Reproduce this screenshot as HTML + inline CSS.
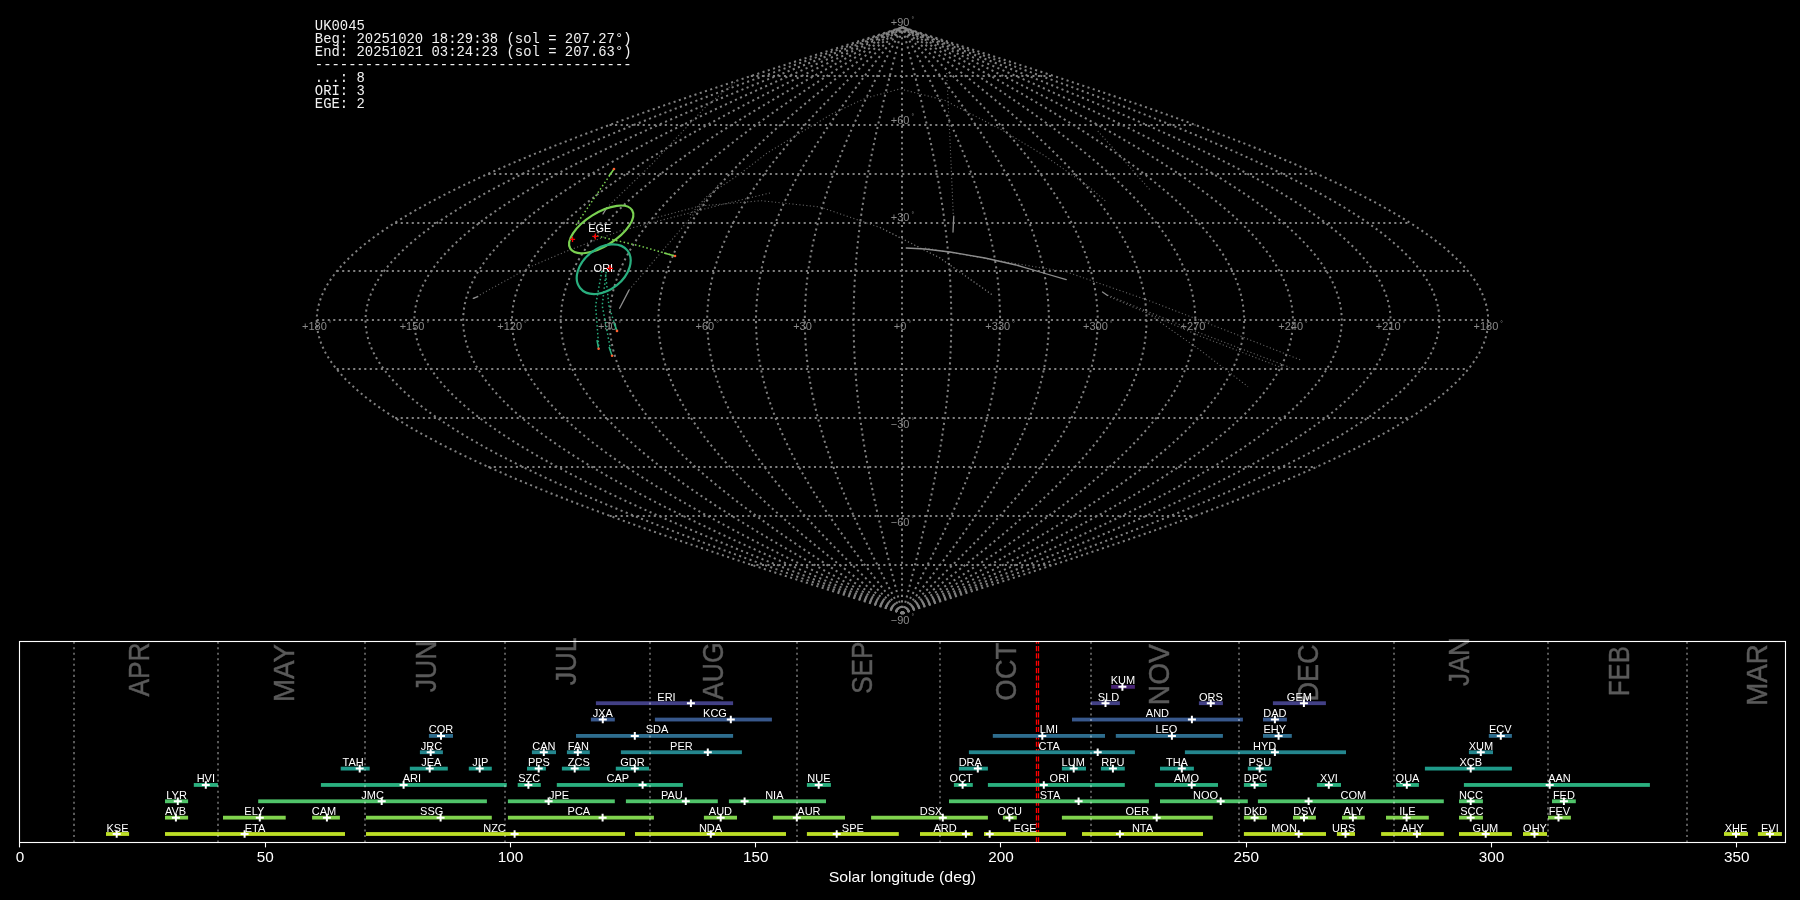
<!DOCTYPE html><html><head><meta charset="utf-8"><style>
html,body{margin:0;padding:0;background:#000;width:1800px;height:900px;overflow:hidden}
svg{display:block;will-change:transform}
svg{font-family:"Liberation Sans",sans-serif}
.mono text{font-family:"Liberation Mono",monospace}
</style></head><body>
<svg width="1800" height="900" viewBox="0 0 1800 900">
<rect width="1800" height="900" fill="#000"/>
<g fill="none" stroke="#808080" stroke-width="2" stroke-dasharray="2.08 3.44"><path d="M750.85 565H1054.05"/><path d="M609.58 516H1195.32"/><path d="M488.26 467H1316.64"/><path d="M395.18 418H1409.72"/><path d="M336.66 369H1468.24"/><path d="M316.7 320H1488.2"/><path d="M336.66 271H1468.24"/><path d="M395.18 223H1409.72"/><path d="M488.26 174H1316.64"/><path d="M609.58 125H1195.32"/><path d="M750.85 76H1054.05"/><path d="M902.45 613.44L912.67 610.18L922.89 606.93L933.11 603.67L943.31 600.41L953.5 597.16L963.68 593.9L973.83 590.64L983.97 587.39L994.08 584.13L1004.16 580.87L1014.22 577.62L1024.23 574.36L1034.22 571.1L1044.16 567.85L1054.05 564.59L1063.9 561.33L1073.71 558.08L1083.46 554.82L1093.15 551.56L1102.79 548.3L1112.36 545.05L1121.88 541.79L1131.32 538.53L1140.7 535.28L1150 532.02L1159.23 528.76L1168.37 525.51L1177.44 522.25L1186.43 518.99L1195.32 515.74L1204.13 512.48L1212.85 509.22L1221.47 505.97L1230 502.71L1238.42 499.45L1246.75 496.2L1254.96 492.94L1263.07 489.68L1271.07 486.43L1278.96 483.17L1286.74 479.91L1294.39 476.66L1301.93 473.4L1309.35 470.14L1316.64 466.89L1323.8 463.63L1330.84 460.37L1337.75 457.11L1344.52 453.86L1351.16 450.6L1357.66 447.34L1364.03 444.09L1370.25 440.83L1376.33 437.57L1382.27 434.32L1388.06 431.06L1393.7 427.8L1399.19 424.55L1404.54 421.29L1409.72 418.03L1414.76 414.78L1419.64 411.52L1424.36 408.26L1428.92 405.01L1433.32 401.75L1437.56 398.49L1441.64 395.24L1445.55 391.98L1449.29 388.72L1452.87 385.47L1456.29 382.21L1459.53 378.95L1462.61 375.7L1465.51 372.44L1468.24 369.18L1470.8 365.92L1473.19 362.67L1475.4 359.41L1477.44 356.15L1479.3 352.9L1480.99 349.64L1482.5 346.38L1483.83 343.13L1484.99 339.87L1485.97 336.61L1486.77 333.36L1487.4 330.1L1487.84 326.84L1488.11 323.59L1488.2 320.33L1488.11 317.07L1487.84 313.82L1487.4 310.56L1486.77 307.3L1485.97 304.05L1484.99 300.79L1483.83 297.53L1482.5 294.28L1480.99 291.02L1479.3 287.76L1477.44 284.51L1475.4 281.25L1473.19 277.99L1470.8 274.74L1468.24 271.48L1465.51 268.22L1462.61 264.96L1459.53 261.71L1456.29 258.45L1452.87 255.19L1449.29 251.94L1445.55 248.68L1441.64 245.42L1437.56 242.17L1433.32 238.91L1428.92 235.65L1424.36 232.4L1419.64 229.14L1414.76 225.88L1409.72 222.63L1404.54 219.37L1399.19 216.11L1393.7 212.86L1388.06 209.6L1382.27 206.34L1376.33 203.09L1370.25 199.83L1364.03 196.57L1357.66 193.32L1351.16 190.06L1344.52 186.8L1337.75 183.55L1330.84 180.29L1323.8 177.03L1316.64 173.77L1309.35 170.52L1301.93 167.26L1294.39 164L1286.74 160.75L1278.96 157.49L1271.07 154.23L1263.07 150.98L1254.96 147.72L1246.75 144.46L1238.42 141.21L1230 137.95L1221.47 134.69L1212.85 131.44L1204.13 128.18L1195.32 124.92L1186.43 121.67L1177.44 118.41L1168.37 115.15L1159.23 111.9L1150 108.64L1140.7 105.38L1131.32 102.13L1121.88 98.87L1112.36 95.61L1102.79 92.36L1093.15 89.1L1083.46 85.84L1073.71 82.58L1063.9 79.33L1054.05 76.07L1044.16 72.81L1034.22 69.56L1024.23 66.3L1014.22 63.04L1004.16 59.79L994.08 56.53L983.97 53.27L973.83 50.02L963.68 46.76L953.5 43.5L943.31 40.25L933.11 36.99L922.89 33.73L912.67 30.48L902.45 27.22"/><path d="M902.45 613.44L911.82 610.18L921.19 606.93L930.55 603.67L939.9 600.41L949.25 597.16L958.58 593.9L967.89 590.64L977.18 587.39L986.45 584.13L995.69 580.87L1004.9 577.62L1014.09 574.36L1023.23 571.1L1032.35 567.85L1041.42 564.59L1050.45 561.33L1059.44 558.08L1068.37 554.82L1077.26 551.56L1086.09 548.3L1094.87 545.05L1103.59 541.79L1112.25 538.53L1120.84 535.28L1129.37 532.02L1137.83 528.76L1146.21 525.51L1154.53 522.25L1162.76 518.99L1170.92 515.74L1178.99 512.48L1186.98 509.22L1194.89 505.97L1202.7 502.71L1210.42 499.45L1218.05 496.2L1225.59 492.94L1233.02 489.68L1240.36 486.43L1247.59 483.17L1254.71 479.91L1261.73 476.66L1268.64 473.4L1275.44 470.14L1282.12 466.89L1288.69 463.63L1295.14 460.37L1301.47 457.11L1307.68 453.86L1313.77 450.6L1319.73 447.34L1325.56 444.09L1331.27 440.83L1336.84 437.57L1342.28 434.32L1347.59 431.06L1352.76 427.8L1357.8 424.55L1362.7 421.29L1367.45 418.03L1372.07 414.78L1376.54 411.52L1380.86 408.26L1385.05 405.01L1389.08 401.75L1392.97 398.49L1396.7 395.24L1400.29 391.98L1403.72 388.72L1407.01 385.47L1410.13 382.21L1413.11 378.95L1415.93 375.7L1418.59 372.44L1421.09 369.18L1423.44 365.92L1425.63 362.67L1427.65 359.41L1429.52 356.15L1431.23 352.9L1432.78 349.64L1434.16 346.38L1435.39 343.13L1436.45 339.87L1437.34 336.61L1438.08 333.36L1438.65 330.1L1439.06 326.84L1439.31 323.59L1439.39 320.33L1439.31 317.07L1439.06 313.82L1438.65 310.56L1438.08 307.3L1437.34 304.05L1436.45 300.79L1435.39 297.53L1434.16 294.28L1432.78 291.02L1431.23 287.76L1429.52 284.51L1427.65 281.25L1425.63 277.99L1423.44 274.74L1421.09 271.48L1418.59 268.22L1415.93 264.96L1413.11 261.71L1410.13 258.45L1407.01 255.19L1403.72 251.94L1400.29 248.68L1396.7 245.42L1392.97 242.17L1389.08 238.91L1385.05 235.65L1380.86 232.4L1376.54 229.14L1372.07 225.88L1367.45 222.63L1362.7 219.37L1357.8 216.11L1352.76 212.86L1347.59 209.6L1342.28 206.34L1336.84 203.09L1331.27 199.83L1325.56 196.57L1319.73 193.32L1313.77 190.06L1307.68 186.8L1301.47 183.55L1295.14 180.29L1288.69 177.03L1282.12 173.77L1275.44 170.52L1268.64 167.26L1261.73 164L1254.71 160.75L1247.59 157.49L1240.36 154.23L1233.02 150.98L1225.59 147.72L1218.05 144.46L1210.42 141.21L1202.7 137.95L1194.89 134.69L1186.98 131.44L1178.99 128.18L1170.92 124.92L1162.76 121.67L1154.53 118.41L1146.21 115.15L1137.83 111.9L1129.37 108.64L1120.84 105.38L1112.25 102.13L1103.59 98.87L1094.87 95.61L1086.09 92.36L1077.26 89.1L1068.37 85.84L1059.44 82.58L1050.45 79.33L1041.42 76.07L1032.35 72.81L1023.23 69.56L1014.09 66.3L1004.9 63.04L995.69 59.79L986.45 56.53L977.18 53.27L967.89 50.02L958.58 46.76L949.25 43.5L939.9 40.25L930.55 36.99L921.19 33.73L911.82 30.48L902.45 27.22"/><path d="M902.45 613.44L910.97 610.18L919.49 606.93L928 603.67L936.5 600.41L944.99 597.16L953.47 593.9L961.94 590.64L970.38 587.39L978.81 584.13L987.21 580.87L995.59 577.62L1003.94 574.36L1012.25 571.1L1020.54 567.85L1028.79 564.59L1037 561.33L1045.16 558.08L1053.29 554.82L1061.37 551.56L1069.4 548.3L1077.38 545.05L1085.3 541.79L1093.18 538.53L1100.99 535.28L1108.74 532.02L1116.43 528.76L1124.05 525.51L1131.61 522.25L1139.1 518.99L1146.51 515.74L1153.85 512.48L1161.12 509.22L1168.3 505.97L1175.41 502.71L1182.43 499.45L1189.36 496.2L1196.21 492.94L1202.97 489.68L1209.64 486.43L1216.21 483.17L1222.69 479.91L1229.07 476.66L1235.35 473.4L1241.53 470.14L1247.61 466.89L1253.58 463.63L1259.44 460.37L1265.2 457.11L1270.84 453.86L1276.38 450.6L1281.79 447.34L1287.1 444.09L1292.28 440.83L1297.35 437.57L1302.3 434.32L1307.12 431.06L1311.83 427.8L1316.4 424.55L1320.85 421.29L1325.18 418.03L1329.37 414.78L1333.44 411.52L1337.37 408.26L1341.17 405.01L1344.84 401.75L1348.37 398.49L1351.77 395.24L1355.03 391.98L1358.15 388.72L1361.14 385.47L1363.98 382.21L1366.68 378.95L1369.25 375.7L1371.67 372.44L1373.94 369.18L1376.08 365.92L1378.06 362.67L1379.91 359.41L1381.61 356.15L1383.16 352.9L1384.57 349.64L1385.82 346.38L1386.94 343.13L1387.9 339.87L1388.72 336.61L1389.39 333.36L1389.91 330.1L1390.28 326.84L1390.5 323.59L1390.57 320.33L1390.5 317.07L1390.28 313.82L1389.91 310.56L1389.39 307.3L1388.72 304.05L1387.9 300.79L1386.94 297.53L1385.82 294.28L1384.57 291.02L1383.16 287.76L1381.61 284.51L1379.91 281.25L1378.06 277.99L1376.08 274.74L1373.94 271.48L1371.67 268.22L1369.25 264.96L1366.68 261.71L1363.98 258.45L1361.14 255.19L1358.15 251.94L1355.03 248.68L1351.77 245.42L1348.37 242.17L1344.84 238.91L1341.17 235.65L1337.37 232.4L1333.44 229.14L1329.37 225.88L1325.18 222.63L1320.85 219.37L1316.4 216.11L1311.83 212.86L1307.12 209.6L1302.3 206.34L1297.35 203.09L1292.28 199.83L1287.1 196.57L1281.79 193.32L1276.38 190.06L1270.84 186.8L1265.2 183.55L1259.44 180.29L1253.58 177.03L1247.61 173.77L1241.53 170.52L1235.35 167.26L1229.07 164L1222.69 160.75L1216.21 157.49L1209.64 154.23L1202.97 150.98L1196.21 147.72L1189.36 144.46L1182.43 141.21L1175.41 137.95L1168.3 134.69L1161.12 131.44L1153.85 128.18L1146.51 124.92L1139.1 121.67L1131.61 118.41L1124.05 115.15L1116.43 111.9L1108.74 108.64L1100.99 105.38L1093.18 102.13L1085.3 98.87L1077.38 95.61L1069.4 92.36L1061.37 89.1L1053.29 85.84L1045.16 82.58L1037 79.33L1028.79 76.07L1020.54 72.81L1012.25 69.56L1003.94 66.3L995.59 63.04L987.21 59.79L978.81 56.53L970.38 53.27L961.94 50.02L953.47 46.76L944.99 43.5L936.5 40.25L928 36.99L919.49 33.73L910.97 30.48L902.45 27.22"/><path d="M902.45 613.44L910.12 610.18L917.78 606.93L925.44 603.67L933.09 600.41L940.74 597.16L948.37 593.9L955.99 590.64L963.59 587.39L971.17 584.13L978.74 580.87L986.27 577.62L993.79 574.36L1001.27 571.1L1008.73 567.85L1016.15 564.59L1023.54 561.33L1030.89 558.08L1038.21 554.82L1045.48 551.56L1052.7 548.3L1059.89 545.05L1067.02 541.79L1074.1 538.53L1081.13 535.28L1088.11 532.02L1095.03 528.76L1101.89 525.51L1108.69 522.25L1115.43 518.99L1122.11 515.74L1128.71 512.48L1135.25 509.22L1141.72 505.97L1148.11 502.71L1154.43 499.45L1160.67 496.2L1166.83 492.94L1172.92 489.68L1178.92 486.43L1184.83 483.17L1190.66 479.91L1196.41 476.66L1202.06 473.4L1207.62 470.14L1213.09 466.89L1218.46 463.63L1223.74 460.37L1228.92 457.11L1234 453.86L1238.98 450.6L1243.86 447.34L1248.63 444.09L1253.3 440.83L1257.86 437.57L1262.31 434.32L1266.66 431.06L1270.89 427.8L1275.01 424.55L1279.01 421.29L1282.91 418.03L1286.68 414.78L1290.34 411.52L1293.88 408.26L1297.3 405.01L1300.6 401.75L1303.78 398.49L1306.84 395.24L1309.77 391.98L1312.58 388.72L1315.27 385.47L1317.83 382.21L1320.26 378.95L1322.57 375.7L1324.74 372.44L1326.79 369.18L1328.71 365.92L1330.5 362.67L1332.16 359.41L1333.69 356.15L1335.09 352.9L1336.35 349.64L1337.49 346.38L1338.49 343.13L1339.36 339.87L1340.09 336.61L1340.69 333.36L1341.16 330.1L1341.49 326.84L1341.7 323.59L1341.76 320.33L1341.7 317.07L1341.49 313.82L1341.16 310.56L1340.69 307.3L1340.09 304.05L1339.36 300.79L1338.49 297.53L1337.49 294.28L1336.35 291.02L1335.09 287.76L1333.69 284.51L1332.16 281.25L1330.5 277.99L1328.71 274.74L1326.79 271.48L1324.74 268.22L1322.57 264.96L1320.26 261.71L1317.83 258.45L1315.27 255.19L1312.58 251.94L1309.77 248.68L1306.84 245.42L1303.78 242.17L1300.6 238.91L1297.3 235.65L1293.88 232.4L1290.34 229.14L1286.68 225.88L1282.91 222.63L1279.01 219.37L1275.01 216.11L1270.89 212.86L1266.66 209.6L1262.31 206.34L1257.86 203.09L1253.3 199.83L1248.63 196.57L1243.86 193.32L1238.98 190.06L1234 186.8L1228.92 183.55L1223.74 180.29L1218.46 177.03L1213.09 173.77L1207.62 170.52L1202.06 167.26L1196.41 164L1190.66 160.75L1184.83 157.49L1178.92 154.23L1172.92 150.98L1166.83 147.72L1160.67 144.46L1154.43 141.21L1148.11 137.95L1141.72 134.69L1135.25 131.44L1128.71 128.18L1122.11 124.92L1115.43 121.67L1108.69 118.41L1101.89 115.15L1095.03 111.9L1088.11 108.64L1081.13 105.38L1074.1 102.13L1067.02 98.87L1059.89 95.61L1052.7 92.36L1045.48 89.1L1038.21 85.84L1030.89 82.58L1023.54 79.33L1016.15 76.07L1008.73 72.81L1001.27 69.56L993.79 66.3L986.27 63.04L978.74 59.79L971.17 56.53L963.59 53.27L955.99 50.02L948.37 46.76L940.74 43.5L933.09 40.25L925.44 36.99L917.78 33.73L910.12 30.48L902.45 27.22"/><path d="M902.45 613.44L909.27 610.18L916.08 606.93L922.89 603.67L929.69 600.41L936.48 597.16L943.27 593.9L950.04 590.64L956.8 587.39L963.54 584.13L970.26 580.87L976.96 577.62L983.64 574.36L990.29 571.1L996.92 567.85L1003.52 564.59L1010.09 561.33L1016.62 558.08L1023.12 554.82L1029.58 551.56L1036.01 548.3L1042.39 545.05L1048.73 541.79L1055.03 538.53L1061.28 535.28L1067.48 532.02L1073.63 528.76L1079.73 525.51L1085.78 522.25L1091.77 518.99L1097.7 515.74L1103.57 512.48L1109.38 509.22L1115.13 505.97L1120.81 502.71L1126.43 499.45L1131.98 496.2L1137.46 492.94L1142.87 489.68L1148.2 486.43L1153.46 483.17L1158.64 479.91L1163.75 476.66L1168.77 473.4L1173.71 470.14L1178.58 466.89L1183.35 463.63L1188.04 460.37L1192.65 457.11L1197.16 453.86L1201.59 450.6L1205.93 447.34L1210.17 444.09L1214.32 440.83L1218.37 437.57L1222.33 434.32L1226.19 431.06L1229.95 427.8L1233.61 424.55L1237.17 421.29L1240.63 418.03L1243.99 414.78L1247.24 411.52L1250.39 408.26L1253.43 405.01L1256.36 401.75L1259.19 398.49L1261.91 395.24L1264.52 391.98L1267.01 388.72L1269.4 385.47L1271.67 382.21L1273.84 378.95L1275.89 375.7L1277.82 372.44L1279.64 369.18L1281.35 365.92L1282.94 362.67L1284.42 359.41L1285.78 356.15L1287.02 352.9L1288.14 349.64L1289.15 346.38L1290.04 343.13L1290.81 339.87L1291.46 336.61L1292 333.36L1292.41 330.1L1292.71 326.84L1292.89 323.59L1292.95 320.33L1292.89 317.07L1292.71 313.82L1292.41 310.56L1292 307.3L1291.46 304.05L1290.81 300.79L1290.04 297.53L1289.15 294.28L1288.14 291.02L1287.02 287.76L1285.78 284.51L1284.42 281.25L1282.94 277.99L1281.35 274.74L1279.64 271.48L1277.82 268.22L1275.89 264.96L1273.84 261.71L1271.67 258.45L1269.4 255.19L1267.01 251.94L1264.52 248.68L1261.91 245.42L1259.19 242.17L1256.36 238.91L1253.43 235.65L1250.39 232.4L1247.24 229.14L1243.99 225.88L1240.63 222.63L1237.17 219.37L1233.61 216.11L1229.95 212.86L1226.19 209.6L1222.33 206.34L1218.37 203.09L1214.32 199.83L1210.17 196.57L1205.93 193.32L1201.59 190.06L1197.16 186.8L1192.65 183.55L1188.04 180.29L1183.35 177.03L1178.58 173.77L1173.71 170.52L1168.77 167.26L1163.75 164L1158.64 160.75L1153.46 157.49L1148.2 154.23L1142.87 150.98L1137.46 147.72L1131.98 144.46L1126.43 141.21L1120.81 137.95L1115.13 134.69L1109.38 131.44L1103.57 128.18L1097.7 124.92L1091.77 121.67L1085.78 118.41L1079.73 115.15L1073.63 111.9L1067.48 108.64L1061.28 105.38L1055.03 102.13L1048.73 98.87L1042.39 95.61L1036.01 92.36L1029.58 89.1L1023.12 85.84L1016.62 82.58L1010.09 79.33L1003.52 76.07L996.92 72.81L990.29 69.56L983.64 66.3L976.96 63.04L970.26 59.79L963.54 56.53L956.8 53.27L950.04 50.02L943.27 46.76L936.48 43.5L929.69 40.25L922.89 36.99L916.08 33.73L909.27 30.48L902.45 27.22"/><path d="M902.45 613.44L908.41 610.18L914.37 606.93L920.33 603.67L926.28 600.41L932.23 597.16L938.17 593.9L944.09 590.64L950 587.39L955.9 584.13L961.78 580.87L967.65 577.62L973.49 574.36L979.31 571.1L985.11 567.85L990.89 564.59L996.63 561.33L1002.35 558.08L1008.04 554.82L1013.69 551.56L1019.31 548.3L1024.9 545.05L1030.45 541.79L1035.96 538.53L1041.43 535.28L1046.85 532.02L1052.24 528.76L1057.57 525.51L1062.86 522.25L1068.1 518.99L1073.29 515.74L1078.43 512.48L1083.52 509.22L1088.55 505.97L1093.52 502.71L1098.43 499.45L1103.29 496.2L1108.08 492.94L1112.81 489.68L1117.48 486.43L1122.08 483.17L1126.62 479.91L1131.08 476.66L1135.48 473.4L1139.81 470.14L1144.06 466.89L1148.24 463.63L1152.34 460.37L1156.37 457.11L1160.32 453.86L1164.2 450.6L1167.99 447.34L1171.7 444.09L1175.33 440.83L1178.88 437.57L1182.34 434.32L1185.72 431.06L1189.01 427.8L1192.22 424.55L1195.33 421.29L1198.36 418.03L1201.3 414.78L1204.14 411.52L1206.9 408.26L1209.56 405.01L1212.12 401.75L1214.6 398.49L1216.97 395.24L1219.26 391.98L1221.44 388.72L1223.53 385.47L1225.52 382.21L1227.41 378.95L1229.21 375.7L1230.9 372.44L1232.49 369.18L1233.99 365.92L1235.38 362.67L1236.67 359.41L1237.86 356.15L1238.95 352.9L1239.93 349.64L1240.81 346.38L1241.59 343.13L1242.27 339.87L1242.84 336.61L1243.31 333.36L1243.67 330.1L1243.93 326.84L1244.09 323.59L1244.14 320.33L1244.09 317.07L1243.93 313.82L1243.67 310.56L1243.31 307.3L1242.84 304.05L1242.27 300.79L1241.59 297.53L1240.81 294.28L1239.93 291.02L1238.95 287.76L1237.86 284.51L1236.67 281.25L1235.38 277.99L1233.99 274.74L1232.49 271.48L1230.9 268.22L1229.21 264.96L1227.41 261.71L1225.52 258.45L1223.53 255.19L1221.44 251.94L1219.26 248.68L1216.97 245.42L1214.6 242.17L1212.12 238.91L1209.56 235.65L1206.9 232.4L1204.14 229.14L1201.3 225.88L1198.36 222.63L1195.33 219.37L1192.22 216.11L1189.01 212.86L1185.72 209.6L1182.34 206.34L1178.88 203.09L1175.33 199.83L1171.7 196.57L1167.99 193.32L1164.2 190.06L1160.32 186.8L1156.37 183.55L1152.34 180.29L1148.24 177.03L1144.06 173.77L1139.81 170.52L1135.48 167.26L1131.08 164L1126.62 160.75L1122.08 157.49L1117.48 154.23L1112.81 150.98L1108.08 147.72L1103.29 144.46L1098.43 141.21L1093.52 137.95L1088.55 134.69L1083.52 131.44L1078.43 128.18L1073.29 124.92L1068.1 121.67L1062.86 118.41L1057.57 115.15L1052.24 111.9L1046.85 108.64L1041.43 105.38L1035.96 102.13L1030.45 98.87L1024.9 95.61L1019.31 92.36L1013.69 89.1L1008.04 85.84L1002.35 82.58L996.63 79.33L990.89 76.07L985.11 72.81L979.31 69.56L973.49 66.3L967.65 63.04L961.78 59.79L955.9 56.53L950 53.27L944.09 50.02L938.17 46.76L932.23 43.5L926.28 40.25L920.33 36.99L914.37 33.73L908.41 30.48L902.45 27.22"/><path d="M902.45 613.44L907.56 610.18L912.67 606.93L917.78 603.67L922.88 600.41L927.98 597.16L933.06 593.9L938.14 590.64L943.21 587.39L948.27 584.13L953.31 580.87L958.33 577.62L963.34 574.36L968.33 571.1L973.3 567.85L978.25 564.59L983.18 561.33L988.08 558.08L992.95 554.82L997.8 551.56L1002.62 548.3L1007.41 545.05L1012.16 541.79L1016.89 538.53L1021.57 535.28L1026.22 532.02L1030.84 528.76L1035.41 525.51L1039.95 522.25L1044.44 518.99L1048.89 515.74L1053.29 512.48L1057.65 509.22L1061.96 505.97L1066.22 502.71L1070.44 499.45L1074.6 496.2L1078.71 492.94L1082.76 489.68L1086.76 486.43L1090.71 483.17L1094.59 479.91L1098.42 476.66L1102.19 473.4L1105.9 470.14L1109.54 466.89L1113.13 463.63L1116.65 460.37L1120.1 457.11L1123.49 453.86L1126.81 450.6L1130.06 447.34L1133.24 444.09L1136.35 440.83L1139.39 437.57L1142.36 434.32L1145.25 431.06L1148.08 427.8L1150.82 424.55L1153.49 421.29L1156.09 418.03L1158.6 414.78L1161.04 411.52L1163.4 408.26L1165.68 405.01L1167.88 401.75L1170 398.49L1172.04 395.24L1174 391.98L1175.87 388.72L1177.66 385.47L1179.37 382.21L1180.99 378.95L1182.53 375.7L1183.98 372.44L1185.35 369.18L1186.63 365.92L1187.82 362.67L1188.92 359.41L1189.94 356.15L1190.88 352.9L1191.72 349.64L1192.47 346.38L1193.14 343.13L1193.72 339.87L1194.21 336.61L1194.61 333.36L1194.92 330.1L1195.15 326.84L1195.28 323.59L1195.32 320.33L1195.28 317.07L1195.15 313.82L1194.92 310.56L1194.61 307.3L1194.21 304.05L1193.72 300.79L1193.14 297.53L1192.47 294.28L1191.72 291.02L1190.88 287.76L1189.94 284.51L1188.92 281.25L1187.82 277.99L1186.63 274.74L1185.35 271.48L1183.98 268.22L1182.53 264.96L1180.99 261.71L1179.37 258.45L1177.66 255.19L1175.87 251.94L1174 248.68L1172.04 245.42L1170 242.17L1167.88 238.91L1165.68 235.65L1163.4 232.4L1161.04 229.14L1158.6 225.88L1156.09 222.63L1153.49 219.37L1150.82 216.11L1148.08 212.86L1145.25 209.6L1142.36 206.34L1139.39 203.09L1136.35 199.83L1133.24 196.57L1130.06 193.32L1126.81 190.06L1123.49 186.8L1120.1 183.55L1116.65 180.29L1113.13 177.03L1109.54 173.77L1105.9 170.52L1102.19 167.26L1098.42 164L1094.59 160.75L1090.71 157.49L1086.76 154.23L1082.76 150.98L1078.71 147.72L1074.6 144.46L1070.44 141.21L1066.22 137.95L1061.96 134.69L1057.65 131.44L1053.29 128.18L1048.89 124.92L1044.44 121.67L1039.95 118.41L1035.41 115.15L1030.84 111.9L1026.22 108.64L1021.57 105.38L1016.89 102.13L1012.16 98.87L1007.41 95.61L1002.62 92.36L997.8 89.1L992.95 85.84L988.08 82.58L983.18 79.33L978.25 76.07L973.3 72.81L968.33 69.56L963.34 66.3L958.33 63.04L953.31 59.79L948.27 56.53L943.21 53.27L938.14 50.02L933.06 46.76L927.98 43.5L922.88 40.25L917.78 36.99L912.67 33.73L907.56 30.48L902.45 27.22"/><path d="M902.45 613.44L906.71 610.18L910.97 606.93L915.22 603.67L919.47 600.41L923.72 597.16L927.96 593.9L932.19 590.64L936.42 587.39L940.63 584.13L944.83 580.87L949.02 577.62L953.19 574.36L957.35 571.1L961.49 567.85L965.62 564.59L969.72 561.33L973.81 558.08L977.87 554.82L981.91 551.56L985.92 548.3L989.91 545.05L993.88 541.79L997.81 538.53L1001.72 535.28L1005.6 532.02L1009.44 528.76L1013.25 525.51L1017.03 522.25L1020.77 518.99L1024.48 515.74L1028.15 512.48L1031.78 509.22L1035.38 505.97L1038.93 502.71L1042.44 499.45L1045.91 496.2L1049.33 492.94L1052.71 489.68L1056.04 486.43L1059.33 483.17L1062.57 479.91L1065.76 476.66L1068.9 473.4L1071.99 470.14L1075.03 466.89L1078.01 463.63L1080.95 460.37L1083.82 457.11L1086.65 453.86L1089.41 450.6L1092.12 447.34L1094.77 444.09L1097.37 440.83L1099.9 437.57L1102.37 434.32L1104.79 431.06L1107.14 427.8L1109.43 424.55L1111.65 421.29L1113.81 418.03L1115.91 414.78L1117.94 411.52L1119.91 408.26L1121.81 405.01L1123.65 401.75L1125.41 398.49L1127.11 395.24L1128.74 391.98L1130.3 388.72L1131.79 385.47L1133.22 382.21L1134.57 378.95L1135.85 375.7L1137.06 372.44L1138.2 369.18L1139.26 365.92L1140.26 362.67L1141.18 359.41L1142.03 356.15L1142.8 352.9L1143.51 349.64L1144.14 346.38L1144.69 343.13L1145.18 339.87L1145.58 336.61L1145.92 333.36L1146.18 330.1L1146.36 326.84L1146.48 323.59L1146.51 320.33L1146.48 317.07L1146.36 313.82L1146.18 310.56L1145.92 307.3L1145.58 304.05L1145.18 300.79L1144.69 297.53L1144.14 294.28L1143.51 291.02L1142.8 287.76L1142.03 284.51L1141.18 281.25L1140.26 277.99L1139.26 274.74L1138.2 271.48L1137.06 268.22L1135.85 264.96L1134.57 261.71L1133.22 258.45L1131.79 255.19L1130.3 251.94L1128.74 248.68L1127.11 245.42L1125.41 242.17L1123.65 238.91L1121.81 235.65L1119.91 232.4L1117.94 229.14L1115.91 225.88L1113.81 222.63L1111.65 219.37L1109.43 216.11L1107.14 212.86L1104.79 209.6L1102.37 206.34L1099.9 203.09L1097.37 199.83L1094.77 196.57L1092.12 193.32L1089.41 190.06L1086.65 186.8L1083.82 183.55L1080.95 180.29L1078.01 177.03L1075.03 173.77L1071.99 170.52L1068.9 167.26L1065.76 164L1062.57 160.75L1059.33 157.49L1056.04 154.23L1052.71 150.98L1049.33 147.72L1045.91 144.46L1042.44 141.21L1038.93 137.95L1035.38 134.69L1031.78 131.44L1028.15 128.18L1024.48 124.92L1020.77 121.67L1017.03 118.41L1013.25 115.15L1009.44 111.9L1005.6 108.64L1001.72 105.38L997.81 102.13L993.88 98.87L989.91 95.61L985.92 92.36L981.91 89.1L977.87 85.84L973.81 82.58L969.72 79.33L965.62 76.07L961.49 72.81L957.35 69.56L953.19 66.3L949.02 63.04L944.83 59.79L940.63 56.53L936.42 53.27L932.19 50.02L927.96 46.76L923.72 43.5L919.47 40.25L915.22 36.99L910.97 33.73L906.71 30.48L902.45 27.22"/><path d="M902.45 613.44L905.86 610.18L909.26 606.93L912.67 603.67L916.07 600.41L919.47 597.16L922.86 593.9L926.24 590.64L929.62 587.39L932.99 584.13L936.35 580.87L939.71 577.62L943.04 574.36L946.37 571.1L949.69 567.85L952.98 564.59L956.27 561.33L959.54 558.08L962.79 554.82L966.02 551.56L969.23 548.3L972.42 545.05L975.59 541.79L978.74 538.53L981.87 535.28L984.97 532.02L988.04 528.76L991.09 525.51L994.11 522.25L997.11 518.99L1000.07 515.74L1003.01 512.48L1005.92 509.22L1008.79 505.97L1011.63 502.71L1014.44 499.45L1017.22 496.2L1019.95 492.94L1022.66 489.68L1025.32 486.43L1027.95 483.17L1030.55 479.91L1033.1 476.66L1035.61 473.4L1038.08 470.14L1040.51 466.89L1042.9 463.63L1045.25 460.37L1047.55 457.11L1049.81 453.86L1052.02 450.6L1054.19 447.34L1056.31 444.09L1058.38 440.83L1060.41 437.57L1062.39 434.32L1064.32 431.06L1066.2 427.8L1068.03 424.55L1069.81 421.29L1071.54 418.03L1073.22 414.78L1074.85 411.52L1076.42 408.26L1077.94 405.01L1079.41 401.75L1080.82 398.49L1082.18 395.24L1083.48 391.98L1084.73 388.72L1085.92 385.47L1087.06 382.21L1088.14 378.95L1089.17 375.7L1090.14 372.44L1091.05 369.18L1091.9 365.92L1092.7 362.67L1093.43 359.41L1094.11 356.15L1094.73 352.9L1095.3 349.64L1095.8 346.38L1096.24 343.13L1096.63 339.87L1096.96 336.61L1097.22 333.36L1097.43 330.1L1097.58 326.84L1097.67 323.59L1097.7 320.33L1097.67 317.07L1097.58 313.82L1097.43 310.56L1097.22 307.3L1096.96 304.05L1096.63 300.79L1096.24 297.53L1095.8 294.28L1095.3 291.02L1094.73 287.76L1094.11 284.51L1093.43 281.25L1092.7 277.99L1091.9 274.74L1091.05 271.48L1090.14 268.22L1089.17 264.96L1088.14 261.71L1087.06 258.45L1085.92 255.19L1084.73 251.94L1083.48 248.68L1082.18 245.42L1080.82 242.17L1079.41 238.91L1077.94 235.65L1076.42 232.4L1074.85 229.14L1073.22 225.88L1071.54 222.63L1069.81 219.37L1068.03 216.11L1066.2 212.86L1064.32 209.6L1062.39 206.34L1060.41 203.09L1058.38 199.83L1056.31 196.57L1054.19 193.32L1052.02 190.06L1049.81 186.8L1047.55 183.55L1045.25 180.29L1042.9 177.03L1040.51 173.77L1038.08 170.52L1035.61 167.26L1033.1 164L1030.55 160.75L1027.95 157.49L1025.32 154.23L1022.66 150.98L1019.95 147.72L1017.22 144.46L1014.44 141.21L1011.63 137.95L1008.79 134.69L1005.92 131.44L1003.01 128.18L1000.07 124.92L997.11 121.67L994.11 118.41L991.09 115.15L988.04 111.9L984.97 108.64L981.87 105.38L978.74 102.13L975.59 98.87L972.42 95.61L969.23 92.36L966.02 89.1L962.79 85.84L959.54 82.58L956.27 79.33L952.98 76.07L949.69 72.81L946.37 69.56L943.04 66.3L939.71 63.04L936.35 59.79L932.99 56.53L929.62 53.27L926.24 50.02L922.86 46.76L919.47 43.5L916.07 40.25L912.67 36.99L909.26 33.73L905.86 30.48L902.45 27.22"/><path d="M902.45 613.44L905.01 610.18L907.56 606.93L910.11 603.67L912.66 600.41L915.21 597.16L917.76 593.9L920.3 590.64L922.83 587.39L925.36 584.13L927.88 580.87L930.39 577.62L932.9 574.36L935.39 571.1L937.88 567.85L940.35 564.59L942.81 561.33L945.26 558.08L947.7 554.82L950.13 551.56L952.53 548.3L954.93 545.05L957.31 541.79L959.67 538.53L962.01 535.28L964.34 532.02L966.64 528.76L968.93 525.51L971.2 522.25L973.44 518.99L975.67 515.74L977.87 512.48L980.05 509.22L982.21 505.97L984.34 502.71L986.44 499.45L988.52 496.2L990.58 492.94L992.61 489.68L994.61 486.43L996.58 483.17L998.52 479.91L1000.44 476.66L1002.32 473.4L1004.17 470.14L1006 466.89L1007.79 463.63L1009.55 460.37L1011.27 457.11L1012.97 453.86L1014.63 450.6L1016.25 447.34L1017.84 444.09L1019.4 440.83L1020.92 437.57L1022.4 434.32L1023.85 431.06L1025.26 427.8L1026.64 424.55L1027.97 421.29L1029.27 418.03L1030.53 414.78L1031.75 411.52L1032.93 408.26L1034.07 405.01L1035.17 401.75L1036.23 398.49L1037.25 395.24L1038.22 391.98L1039.16 388.72L1040.06 385.47L1040.91 382.21L1041.72 378.95L1042.49 375.7L1043.21 372.44L1043.9 369.18L1044.54 365.92L1045.13 362.67L1045.69 359.41L1046.2 356.15L1046.66 352.9L1047.08 349.64L1047.46 346.38L1047.8 343.13L1048.09 339.87L1048.33 336.61L1048.53 333.36L1048.69 330.1L1048.8 326.84L1048.87 323.59L1048.89 320.33L1048.87 317.07L1048.8 313.82L1048.69 310.56L1048.53 307.3L1048.33 304.05L1048.09 300.79L1047.8 297.53L1047.46 294.28L1047.08 291.02L1046.66 287.76L1046.2 284.51L1045.69 281.25L1045.13 277.99L1044.54 274.74L1043.9 271.48L1043.21 268.22L1042.49 264.96L1041.72 261.71L1040.91 258.45L1040.06 255.19L1039.16 251.94L1038.22 248.68L1037.25 245.42L1036.23 242.17L1035.17 238.91L1034.07 235.65L1032.93 232.4L1031.75 229.14L1030.53 225.88L1029.27 222.63L1027.97 219.37L1026.64 216.11L1025.26 212.86L1023.85 209.6L1022.4 206.34L1020.92 203.09L1019.4 199.83L1017.84 196.57L1016.25 193.32L1014.63 190.06L1012.97 186.8L1011.27 183.55L1009.55 180.29L1007.79 177.03L1006 173.77L1004.17 170.52L1002.32 167.26L1000.44 164L998.52 160.75L996.58 157.49L994.61 154.23L992.61 150.98L990.58 147.72L988.52 144.46L986.44 141.21L984.34 137.95L982.21 134.69L980.05 131.44L977.87 128.18L975.67 124.92L973.44 121.67L971.2 118.41L968.93 115.15L966.64 111.9L964.34 108.64L962.01 105.38L959.67 102.13L957.31 98.87L954.93 95.61L952.53 92.36L950.13 89.1L947.7 85.84L945.26 82.58L942.81 79.33L940.35 76.07L937.88 72.81L935.39 69.56L932.9 66.3L930.39 63.04L927.88 59.79L925.36 56.53L922.83 53.27L920.3 50.02L917.76 46.76L915.21 43.5L912.66 40.25L910.11 36.99L907.56 33.73L905.01 30.48L902.45 27.22"/><path d="M902.45 613.44L904.15 610.18L905.86 606.93L907.56 603.67L909.26 600.41L910.96 597.16L912.65 593.9L914.35 590.64L916.04 587.39L917.72 584.13L919.4 580.87L921.08 577.62L922.75 574.36L924.41 571.1L926.07 567.85L927.72 564.59L929.36 561.33L930.99 558.08L932.62 554.82L934.23 551.56L935.84 548.3L937.44 545.05L939.02 541.79L940.6 538.53L942.16 535.28L943.71 532.02L945.25 528.76L946.77 525.51L948.28 522.25L949.78 518.99L951.26 515.74L952.73 512.48L954.18 509.22L955.62 505.97L957.04 502.71L958.45 499.45L959.83 496.2L961.2 492.94L962.55 489.68L963.89 486.43L965.2 483.17L966.5 479.91L967.77 476.66L969.03 473.4L970.27 470.14L971.48 466.89L972.68 463.63L973.85 460.37L975 457.11L976.13 453.86L977.24 450.6L978.32 447.34L979.38 444.09L980.42 440.83L981.43 437.57L982.42 434.32L983.38 431.06L984.33 427.8L985.24 424.55L986.13 421.29L987 418.03L987.83 414.78L988.65 411.52L989.43 408.26L990.19 405.01L990.93 401.75L991.63 398.49L992.31 395.24L992.97 391.98L993.59 388.72L994.19 385.47L994.76 382.21L995.3 378.95L995.81 375.7L996.29 372.44L996.75 369.18L997.18 365.92L997.57 362.67L997.94 359.41L998.28 356.15L998.59 352.9L998.87 349.64L999.12 346.38L999.35 343.13L999.54 339.87L999.7 336.61L999.84 333.36L999.94 330.1L1000.02 326.84L1000.06 323.59L1000.07 320.33L1000.06 317.07L1000.02 313.82L999.94 310.56L999.84 307.3L999.7 304.05L999.54 300.79L999.35 297.53L999.12 294.28L998.87 291.02L998.59 287.76L998.28 284.51L997.94 281.25L997.57 277.99L997.18 274.74L996.75 271.48L996.29 268.22L995.81 264.96L995.3 261.71L994.76 258.45L994.19 255.19L993.59 251.94L992.97 248.68L992.31 245.42L991.63 242.17L990.93 238.91L990.19 235.65L989.43 232.4L988.65 229.14L987.83 225.88L987 222.63L986.13 219.37L985.24 216.11L984.33 212.86L983.38 209.6L982.42 206.34L981.43 203.09L980.42 199.83L979.38 196.57L978.32 193.32L977.24 190.06L976.13 186.8L975 183.55L973.85 180.29L972.68 177.03L971.48 173.77L970.27 170.52L969.03 167.26L967.77 164L966.5 160.75L965.2 157.49L963.89 154.23L962.55 150.98L961.2 147.72L959.83 144.46L958.45 141.21L957.04 137.95L955.62 134.69L954.18 131.44L952.73 128.18L951.26 124.92L949.78 121.67L948.28 118.41L946.77 115.15L945.25 111.9L943.71 108.64L942.16 105.38L940.6 102.13L939.02 98.87L937.44 95.61L935.84 92.36L934.23 89.1L932.62 85.84L930.99 82.58L929.36 79.33L927.72 76.07L926.07 72.81L924.41 69.56L922.75 66.3L921.08 63.04L919.4 59.79L917.72 56.53L916.04 53.27L914.35 50.02L912.65 46.76L910.96 43.5L909.26 40.25L907.56 36.99L905.86 33.73L904.15 30.48L902.45 27.22"/><path d="M902.45 613.44L903.3 610.18L904.15 606.93L905 603.67L905.85 600.41L906.7 597.16L907.55 593.9L908.4 590.64L909.24 587.39L910.09 584.13L910.93 580.87L911.76 577.62L912.6 574.36L913.43 571.1L914.26 567.85L915.08 564.59L915.9 561.33L916.72 558.08L917.53 554.82L918.34 551.56L919.14 548.3L919.94 545.05L920.74 541.79L921.52 538.53L922.3 535.28L923.08 532.02L923.85 528.76L924.61 525.51L925.37 522.25L926.11 518.99L926.86 515.74L927.59 512.48L928.32 509.22L929.04 505.97L929.75 502.71L930.45 499.45L931.14 496.2L931.83 492.94L932.5 489.68L933.17 486.43L933.83 483.17L934.47 479.91L935.11 476.66L935.74 473.4L936.36 470.14L936.97 466.89L937.56 463.63L938.15 460.37L938.72 457.11L939.29 453.86L939.84 450.6L940.38 447.34L940.91 444.09L941.43 440.83L941.94 437.57L942.43 434.32L942.92 431.06L943.39 427.8L943.85 424.55L944.29 421.29L944.72 418.03L945.14 414.78L945.55 411.52L945.94 408.26L946.32 405.01L946.69 401.75L947.04 398.49L947.38 395.24L947.71 391.98L948.02 388.72L948.32 385.47L948.6 382.21L948.87 378.95L949.13 375.7L949.37 372.44L949.6 369.18L949.81 365.92L950.01 362.67L950.2 359.41L950.37 356.15L950.52 352.9L950.66 349.64L950.79 346.38L950.9 343.13L951 339.87L951.08 336.61L951.14 333.36L951.2 330.1L951.23 326.84L951.26 323.59L951.26 320.33L951.26 317.07L951.23 313.82L951.2 310.56L951.14 307.3L951.08 304.05L951 300.79L950.9 297.53L950.79 294.28L950.66 291.02L950.52 287.76L950.37 284.51L950.2 281.25L950.01 277.99L949.81 274.74L949.6 271.48L949.37 268.22L949.13 264.96L948.87 261.71L948.6 258.45L948.32 255.19L948.02 251.94L947.71 248.68L947.38 245.42L947.04 242.17L946.69 238.91L946.32 235.65L945.94 232.4L945.55 229.14L945.14 225.88L944.72 222.63L944.29 219.37L943.85 216.11L943.39 212.86L942.92 209.6L942.43 206.34L941.94 203.09L941.43 199.83L940.91 196.57L940.38 193.32L939.84 190.06L939.29 186.8L938.72 183.55L938.15 180.29L937.56 177.03L936.97 173.77L936.36 170.52L935.74 167.26L935.11 164L934.47 160.75L933.83 157.49L933.17 154.23L932.5 150.98L931.83 147.72L931.14 144.46L930.45 141.21L929.75 137.95L929.04 134.69L928.32 131.44L927.59 128.18L926.86 124.92L926.11 121.67L925.37 118.41L924.61 115.15L923.85 111.9L923.08 108.64L922.3 105.38L921.52 102.13L920.74 98.87L919.94 95.61L919.14 92.36L918.34 89.1L917.53 85.84L916.72 82.58L915.9 79.33L915.08 76.07L914.26 72.81L913.43 69.56L912.6 66.3L911.76 63.04L910.93 59.79L910.09 56.53L909.24 53.27L908.4 50.02L907.55 46.76L906.7 43.5L905.85 40.25L905 36.99L904.15 33.73L903.3 30.48L902.45 27.22"/><path d="M902 613.44L902 610.18L902 606.93L902 603.67L902 600.41L902 597.16L902 593.9L902 590.64L902 587.39L902 584.13L902 580.87L902 577.62L902 574.36L902 571.1L902 567.85L902 564.59L902 561.33L902 558.08L902 554.82L902 551.56L902 548.3L902 545.05L902 541.79L902 538.53L902 535.28L902 532.02L902 528.76L902 525.51L902 522.25L902 518.99L902 515.74L902 512.48L902 509.22L902 505.97L902 502.71L902 499.45L902 496.2L902 492.94L902 489.68L902 486.43L902 483.17L902 479.91L902 476.66L902 473.4L902 470.14L902 466.89L902 463.63L902 460.37L902 457.11L902 453.86L902 450.6L902 447.34L902 444.09L902 440.83L902 437.57L902 434.32L902 431.06L902 427.8L902 424.55L902 421.29L902 418.03L902 414.78L902 411.52L902 408.26L902 405.01L902 401.75L902 398.49L902 395.24L902 391.98L902 388.72L902 385.47L902 382.21L902 378.95L902 375.7L902 372.44L902 369.18L902 365.92L902 362.67L902 359.41L902 356.15L902 352.9L902 349.64L902 346.38L902 343.13L902 339.87L902 336.61L902 333.36L902 330.1L902 326.84L902 323.59L902 320.33L902 317.07L902 313.82L902 310.56L902 307.3L902 304.05L902 300.79L902 297.53L902 294.28L902 291.02L902 287.76L902 284.51L902 281.25L902 277.99L902 274.74L902 271.48L902 268.22L902 264.96L902 261.71L902 258.45L902 255.19L902 251.94L902 248.68L902 245.42L902 242.17L902 238.91L902 235.65L902 232.4L902 229.14L902 225.88L902 222.63L902 219.37L902 216.11L902 212.86L902 209.6L902 206.34L902 203.09L902 199.83L902 196.57L902 193.32L902 190.06L902 186.8L902 183.55L902 180.29L902 177.03L902 173.77L902 170.52L902 167.26L902 164L902 160.75L902 157.49L902 154.23L902 150.98L902 147.72L902 144.46L902 141.21L902 137.95L902 134.69L902 131.44L902 128.18L902 124.92L902 121.67L902 118.41L902 115.15L902 111.9L902 108.64L902 105.38L902 102.13L902 98.87L902 95.61L902 92.36L902 89.1L902 85.84L902 82.58L902 79.33L902 76.07L902 72.81L902 69.56L902 66.3L902 63.04L902 59.79L902 56.53L902 53.27L902 50.02L902 46.76L902 43.5L902 40.25L902 36.99L902 33.73L902 30.48L902 27.22"/><path d="M902.45 613.44L901.6 610.18L900.75 606.93L899.9 603.67L899.05 600.41L898.2 597.16L897.35 593.9L896.5 590.64L895.66 587.39L894.81 584.13L893.97 580.87L893.14 577.62L892.3 574.36L891.47 571.1L890.64 567.85L889.82 564.59L889 561.33L888.18 558.08L887.37 554.82L886.56 551.56L885.76 548.3L884.96 545.05L884.16 541.79L883.38 538.53L882.6 535.28L881.82 532.02L881.05 528.76L880.29 525.51L879.53 522.25L878.79 518.99L878.04 515.74L877.31 512.48L876.58 509.22L875.86 505.97L875.15 502.71L874.45 499.45L873.76 496.2L873.07 492.94L872.4 489.68L871.73 486.43L871.07 483.17L870.43 479.91L869.79 476.66L869.16 473.4L868.54 470.14L867.93 466.89L867.34 463.63L866.75 460.37L866.18 457.11L865.61 453.86L865.06 450.6L864.52 447.34L863.99 444.09L863.47 440.83L862.96 437.57L862.47 434.32L861.98 431.06L861.51 427.8L861.05 424.55L860.61 421.29L860.18 418.03L859.76 414.78L859.35 411.52L858.96 408.26L858.58 405.01L858.21 401.75L857.86 398.49L857.52 395.24L857.19 391.98L856.88 388.72L856.58 385.47L856.3 382.21L856.03 378.95L855.77 375.7L855.53 372.44L855.3 369.18L855.09 365.92L854.89 362.67L854.7 359.41L854.53 356.15L854.38 352.9L854.24 349.64L854.11 346.38L854 343.13L853.9 339.87L853.82 336.61L853.76 333.36L853.7 330.1L853.67 326.84L853.64 323.59L853.64 320.33L853.64 317.07L853.67 313.82L853.7 310.56L853.76 307.3L853.82 304.05L853.9 300.79L854 297.53L854.11 294.28L854.24 291.02L854.38 287.76L854.53 284.51L854.7 281.25L854.89 277.99L855.09 274.74L855.3 271.48L855.53 268.22L855.77 264.96L856.03 261.71L856.3 258.45L856.58 255.19L856.88 251.94L857.19 248.68L857.52 245.42L857.86 242.17L858.21 238.91L858.58 235.65L858.96 232.4L859.35 229.14L859.76 225.88L860.18 222.63L860.61 219.37L861.05 216.11L861.51 212.86L861.98 209.6L862.47 206.34L862.96 203.09L863.47 199.83L863.99 196.57L864.52 193.32L865.06 190.06L865.61 186.8L866.18 183.55L866.75 180.29L867.34 177.03L867.93 173.77L868.54 170.52L869.16 167.26L869.79 164L870.43 160.75L871.07 157.49L871.73 154.23L872.4 150.98L873.07 147.72L873.76 144.46L874.45 141.21L875.15 137.95L875.86 134.69L876.58 131.44L877.31 128.18L878.04 124.92L878.79 121.67L879.53 118.41L880.29 115.15L881.05 111.9L881.82 108.64L882.6 105.38L883.38 102.13L884.16 98.87L884.96 95.61L885.76 92.36L886.56 89.1L887.37 85.84L888.18 82.58L889 79.33L889.82 76.07L890.64 72.81L891.47 69.56L892.3 66.3L893.14 63.04L893.97 59.79L894.81 56.53L895.66 53.27L896.5 50.02L897.35 46.76L898.2 43.5L899.05 40.25L899.9 36.99L900.75 33.73L901.6 30.48L902.45 27.22"/><path d="M902.45 613.44L900.75 610.18L899.04 606.93L897.34 603.67L895.64 600.41L893.94 597.16L892.25 593.9L890.55 590.64L888.86 587.39L887.18 584.13L885.5 580.87L883.82 577.62L882.15 574.36L880.49 571.1L878.83 567.85L877.18 564.59L875.54 561.33L873.91 558.08L872.28 554.82L870.67 551.56L869.06 548.3L867.46 545.05L865.88 541.79L864.3 538.53L862.74 535.28L861.19 532.02L859.65 528.76L858.13 525.51L856.62 522.25L855.12 518.99L853.64 515.74L852.17 512.48L850.72 509.22L849.28 505.97L847.86 502.71L846.45 499.45L845.07 496.2L843.7 492.94L842.35 489.68L841.01 486.43L839.7 483.17L838.4 479.91L837.13 476.66L835.87 473.4L834.63 470.14L833.42 466.89L832.22 463.63L831.05 460.37L829.9 457.11L828.77 453.86L827.66 450.6L826.58 447.34L825.52 444.09L824.48 440.83L823.47 437.57L822.48 434.32L821.52 431.06L820.57 427.8L819.66 424.55L818.77 421.29L817.9 418.03L817.07 414.78L816.25 411.52L815.47 408.26L814.71 405.01L813.97 401.75L813.27 398.49L812.59 395.24L811.93 391.98L811.31 388.72L810.71 385.47L810.14 382.21L809.6 378.95L809.09 375.7L808.61 372.44L808.15 369.18L807.72 365.92L807.33 362.67L806.96 359.41L806.62 356.15L806.31 352.9L806.03 349.64L805.78 346.38L805.55 343.13L805.36 339.87L805.2 336.61L805.06 333.36L804.96 330.1L804.88 326.84L804.84 323.59L804.83 320.33L804.84 317.07L804.88 313.82L804.96 310.56L805.06 307.3L805.2 304.05L805.36 300.79L805.55 297.53L805.78 294.28L806.03 291.02L806.31 287.76L806.62 284.51L806.96 281.25L807.33 277.99L807.72 274.74L808.15 271.48L808.61 268.22L809.09 264.96L809.6 261.71L810.14 258.45L810.71 255.19L811.31 251.94L811.93 248.68L812.59 245.42L813.27 242.17L813.97 238.91L814.71 235.65L815.47 232.4L816.25 229.14L817.07 225.88L817.9 222.63L818.77 219.37L819.66 216.11L820.57 212.86L821.52 209.6L822.48 206.34L823.47 203.09L824.48 199.83L825.52 196.57L826.58 193.32L827.66 190.06L828.77 186.8L829.9 183.55L831.05 180.29L832.22 177.03L833.42 173.77L834.63 170.52L835.87 167.26L837.13 164L838.4 160.75L839.7 157.49L841.01 154.23L842.35 150.98L843.7 147.72L845.07 144.46L846.45 141.21L847.86 137.95L849.28 134.69L850.72 131.44L852.17 128.18L853.64 124.92L855.12 121.67L856.62 118.41L858.13 115.15L859.65 111.9L861.19 108.64L862.74 105.38L864.3 102.13L865.88 98.87L867.46 95.61L869.06 92.36L870.67 89.1L872.28 85.84L873.91 82.58L875.54 79.33L877.18 76.07L878.83 72.81L880.49 69.56L882.15 66.3L883.82 63.04L885.5 59.79L887.18 56.53L888.86 53.27L890.55 50.02L892.25 46.76L893.94 43.5L895.64 40.25L897.34 36.99L899.04 33.73L900.75 30.48L902.45 27.22"/><path d="M902.45 613.44L899.89 610.18L897.34 606.93L894.79 603.67L892.24 600.41L889.69 597.16L887.14 593.9L884.6 590.64L882.07 587.39L879.54 584.13L877.02 580.87L874.51 577.62L872 574.36L869.51 571.1L867.02 567.85L864.55 564.59L862.09 561.33L859.64 558.08L857.2 554.82L854.77 551.56L852.37 548.3L849.97 545.05L847.59 541.79L845.23 538.53L842.89 535.28L840.56 532.02L838.26 528.76L835.97 525.51L833.7 522.25L831.46 518.99L829.23 515.74L827.03 512.48L824.85 509.22L822.69 505.97L820.56 502.71L818.46 499.45L816.38 496.2L814.32 492.94L812.29 489.68L810.29 486.43L808.32 483.17L806.38 479.91L804.46 476.66L802.58 473.4L800.73 470.14L798.9 466.89L797.11 463.63L795.35 460.37L793.63 457.11L791.93 453.86L790.27 450.6L788.65 447.34L787.06 444.09L785.5 440.83L783.98 437.57L782.5 434.32L781.05 431.06L779.64 427.8L778.26 424.55L776.93 421.29L775.63 418.03L774.37 414.78L773.15 411.52L771.97 408.26L770.83 405.01L769.73 401.75L768.67 398.49L767.65 395.24L766.68 391.98L765.74 388.72L764.84 385.47L763.99 382.21L763.18 378.95L762.41 375.7L761.69 372.44L761 369.18L760.36 365.92L759.77 362.67L759.21 359.41L758.7 356.15L758.24 352.9L757.82 349.64L757.44 346.38L757.1 343.13L756.81 339.87L756.57 336.61L756.37 333.36L756.21 330.1L756.1 326.84L756.03 323.59L756.01 320.33L756.03 317.07L756.1 313.82L756.21 310.56L756.37 307.3L756.57 304.05L756.81 300.79L757.1 297.53L757.44 294.28L757.82 291.02L758.24 287.76L758.7 284.51L759.21 281.25L759.77 277.99L760.36 274.74L761 271.48L761.69 268.22L762.41 264.96L763.18 261.71L763.99 258.45L764.84 255.19L765.74 251.94L766.68 248.68L767.65 245.42L768.67 242.17L769.73 238.91L770.83 235.65L771.97 232.4L773.15 229.14L774.37 225.88L775.63 222.63L776.93 219.37L778.26 216.11L779.64 212.86L781.05 209.6L782.5 206.34L783.98 203.09L785.5 199.83L787.06 196.57L788.65 193.32L790.27 190.06L791.93 186.8L793.63 183.55L795.35 180.29L797.11 177.03L798.9 173.77L800.73 170.52L802.58 167.26L804.46 164L806.38 160.75L808.32 157.49L810.29 154.23L812.29 150.98L814.32 147.72L816.38 144.46L818.46 141.21L820.56 137.95L822.69 134.69L824.85 131.44L827.03 128.18L829.23 124.92L831.46 121.67L833.7 118.41L835.97 115.15L838.26 111.9L840.56 108.64L842.89 105.38L845.23 102.13L847.59 98.87L849.97 95.61L852.37 92.36L854.77 89.1L857.2 85.84L859.64 82.58L862.09 79.33L864.55 76.07L867.02 72.81L869.51 69.56L872 66.3L874.51 63.04L877.02 59.79L879.54 56.53L882.07 53.27L884.6 50.02L887.14 46.76L889.69 43.5L892.24 40.25L894.79 36.99L897.34 33.73L899.89 30.48L902.45 27.22"/><path d="M902.45 613.44L899.04 610.18L895.64 606.93L892.23 603.67L888.83 600.41L885.43 597.16L882.04 593.9L878.66 590.64L875.28 587.39L871.91 584.13L868.55 580.87L865.19 577.62L861.86 574.36L858.53 571.1L855.21 567.85L851.92 564.59L848.63 561.33L845.36 558.08L842.11 554.82L838.88 551.56L835.67 548.3L832.48 545.05L829.31 541.79L826.16 538.53L823.03 535.28L819.93 532.02L816.86 528.76L813.81 525.51L810.79 522.25L807.79 518.99L804.83 515.74L801.89 512.48L798.98 509.22L796.11 505.97L793.27 502.71L790.46 499.45L787.68 496.2L784.95 492.94L782.24 489.68L779.58 486.43L776.95 483.17L774.35 479.91L771.8 476.66L769.29 473.4L766.82 470.14L764.39 466.89L762 463.63L759.65 460.37L757.35 457.11L755.09 453.86L752.88 450.6L750.71 447.34L748.59 444.09L746.52 440.83L744.49 437.57L742.51 434.32L740.58 431.06L738.7 427.8L736.87 424.55L735.09 421.29L733.36 418.03L731.68 414.78L730.05 411.52L728.48 408.26L726.96 405.01L725.49 401.75L724.08 398.49L722.72 395.24L721.42 391.98L720.17 388.72L718.98 385.47L717.84 382.21L716.76 378.95L715.73 375.7L714.76 372.44L713.85 369.18L713 365.92L712.2 362.67L711.47 359.41L710.79 356.15L710.17 352.9L709.6 349.64L709.1 346.38L708.66 343.13L708.27 339.87L707.94 336.61L707.68 333.36L707.47 330.1L707.32 326.84L707.23 323.59L707.2 320.33L707.23 317.07L707.32 313.82L707.47 310.56L707.68 307.3L707.94 304.05L708.27 300.79L708.66 297.53L709.1 294.28L709.6 291.02L710.17 287.76L710.79 284.51L711.47 281.25L712.2 277.99L713 274.74L713.85 271.48L714.76 268.22L715.73 264.96L716.76 261.71L717.84 258.45L718.98 255.19L720.17 251.94L721.42 248.68L722.72 245.42L724.08 242.17L725.49 238.91L726.96 235.65L728.48 232.4L730.05 229.14L731.68 225.88L733.36 222.63L735.09 219.37L736.87 216.11L738.7 212.86L740.58 209.6L742.51 206.34L744.49 203.09L746.52 199.83L748.59 196.57L750.71 193.32L752.88 190.06L755.09 186.8L757.35 183.55L759.65 180.29L762 177.03L764.39 173.77L766.82 170.52L769.29 167.26L771.8 164L774.35 160.75L776.95 157.49L779.58 154.23L782.24 150.98L784.95 147.72L787.68 144.46L790.46 141.21L793.27 137.95L796.11 134.69L798.98 131.44L801.89 128.18L804.83 124.92L807.79 121.67L810.79 118.41L813.81 115.15L816.86 111.9L819.93 108.64L823.03 105.38L826.16 102.13L829.31 98.87L832.48 95.61L835.67 92.36L838.88 89.1L842.11 85.84L845.36 82.58L848.63 79.33L851.92 76.07L855.21 72.81L858.53 69.56L861.86 66.3L865.19 63.04L868.55 59.79L871.91 56.53L875.28 53.27L878.66 50.02L882.04 46.76L885.43 43.5L888.83 40.25L892.23 36.99L895.64 33.73L899.04 30.48L902.45 27.22"/><path d="M902.45 613.44L898.19 610.18L893.93 606.93L889.68 603.67L885.43 600.41L881.18 597.16L876.94 593.9L872.71 590.64L868.48 587.39L864.27 584.13L860.07 580.87L855.88 577.62L851.71 574.36L847.55 571.1L843.41 567.85L839.28 564.59L835.18 561.33L831.09 558.08L827.03 554.82L822.99 551.56L818.98 548.3L814.99 545.05L811.02 541.79L807.09 538.53L803.18 535.28L799.3 532.02L795.46 528.76L791.65 525.51L787.87 522.25L784.13 518.99L780.42 515.74L776.75 512.48L773.12 509.22L769.52 505.97L765.97 502.71L762.46 499.45L758.99 496.2L755.57 492.94L752.19 489.68L748.86 486.43L745.57 483.17L742.33 479.91L739.14 476.66L736 473.4L732.91 470.14L729.87 466.89L726.89 463.63L723.95 460.37L721.08 457.11L718.25 453.86L715.49 450.6L712.78 447.34L710.13 444.09L707.53 440.83L705 437.57L702.53 434.32L700.11 431.06L697.76 427.8L695.47 424.55L693.25 421.29L691.09 418.03L688.99 414.78L686.96 411.52L684.99 408.26L683.09 405.01L681.25 401.75L679.49 398.49L677.79 395.24L676.16 391.98L674.6 388.72L673.11 385.47L671.68 382.21L670.33 378.95L669.05 375.7L667.84 372.44L666.7 369.18L665.64 365.92L664.64 362.67L663.72 359.41L662.87 356.15L662.1 352.9L661.39 349.64L660.76 346.38L660.21 343.13L659.72 339.87L659.32 336.61L658.98 333.36L658.72 330.1L658.54 326.84L658.42 323.59L658.39 320.33L658.42 317.07L658.54 313.82L658.72 310.56L658.98 307.3L659.32 304.05L659.72 300.79L660.21 297.53L660.76 294.28L661.39 291.02L662.1 287.76L662.87 284.51L663.72 281.25L664.64 277.99L665.64 274.74L666.7 271.48L667.84 268.22L669.05 264.96L670.33 261.71L671.68 258.45L673.11 255.19L674.6 251.94L676.16 248.68L677.79 245.42L679.49 242.17L681.25 238.91L683.09 235.65L684.99 232.4L686.96 229.14L688.99 225.88L691.09 222.63L693.25 219.37L695.47 216.11L697.76 212.86L700.11 209.6L702.53 206.34L705 203.09L707.53 199.83L710.13 196.57L712.78 193.32L715.49 190.06L718.25 186.8L721.08 183.55L723.95 180.29L726.89 177.03L729.87 173.77L732.91 170.52L736 167.26L739.14 164L742.33 160.75L745.57 157.49L748.86 154.23L752.19 150.98L755.57 147.72L758.99 144.46L762.46 141.21L765.97 137.95L769.52 134.69L773.12 131.44L776.75 128.18L780.42 124.92L784.13 121.67L787.87 118.41L791.65 115.15L795.46 111.9L799.3 108.64L803.18 105.38L807.09 102.13L811.02 98.87L814.99 95.61L818.98 92.36L822.99 89.1L827.03 85.84L831.09 82.58L835.18 79.33L839.28 76.07L843.41 72.81L847.55 69.56L851.71 66.3L855.88 63.04L860.07 59.79L864.27 56.53L868.48 53.27L872.71 50.02L876.94 46.76L881.18 43.5L885.43 40.25L889.68 36.99L893.93 33.73L898.19 30.48L902.45 27.22"/><path d="M902.45 613.44L897.34 610.18L892.23 606.93L887.12 603.67L882.02 600.41L876.92 597.16L871.84 593.9L866.76 590.64L861.69 587.39L856.63 584.13L851.59 580.87L846.57 577.62L841.56 574.36L836.57 571.1L831.6 567.85L826.65 564.59L821.72 561.33L816.82 558.08L811.95 554.82L807.1 551.56L802.28 548.3L797.49 545.05L792.74 541.79L788.01 538.53L783.33 535.28L778.68 532.02L774.06 528.76L769.49 525.51L764.95 522.25L760.46 518.99L756.01 515.74L751.61 512.48L747.25 509.22L742.94 505.97L738.68 502.71L734.46 499.45L730.3 496.2L726.19 492.94L722.14 489.68L718.14 486.43L714.19 483.17L710.31 479.91L706.48 476.66L702.71 473.4L699 470.14L695.36 466.89L691.77 463.63L688.25 460.37L684.8 457.11L681.41 453.86L678.09 450.6L674.84 447.34L671.66 444.09L668.55 440.83L665.51 437.57L662.54 434.32L659.65 431.06L656.82 427.8L654.08 424.55L651.41 421.29L648.81 418.03L646.3 414.78L643.86 411.52L641.5 408.26L639.22 405.01L637.02 401.75L634.9 398.49L632.86 395.24L630.9 391.98L629.03 388.72L627.24 385.47L625.53 382.21L623.91 378.95L622.37 375.7L620.92 372.44L619.55 369.18L618.27 365.92L617.08 362.67L615.98 359.41L614.96 356.15L614.02 352.9L613.18 349.64L612.43 346.38L611.76 343.13L611.18 339.87L610.69 336.61L610.29 333.36L609.98 330.1L609.75 326.84L609.62 323.59L609.58 320.33L609.62 317.07L609.75 313.82L609.98 310.56L610.29 307.3L610.69 304.05L611.18 300.79L611.76 297.53L612.43 294.28L613.18 291.02L614.02 287.76L614.96 284.51L615.98 281.25L617.08 277.99L618.27 274.74L619.55 271.48L620.92 268.22L622.37 264.96L623.91 261.71L625.53 258.45L627.24 255.19L629.03 251.94L630.9 248.68L632.86 245.42L634.9 242.17L637.02 238.91L639.22 235.65L641.5 232.4L643.86 229.14L646.3 225.88L648.81 222.63L651.41 219.37L654.08 216.11L656.82 212.86L659.65 209.6L662.54 206.34L665.51 203.09L668.55 199.83L671.66 196.57L674.84 193.32L678.09 190.06L681.41 186.8L684.8 183.55L688.25 180.29L691.77 177.03L695.36 173.77L699 170.52L702.71 167.26L706.48 164L710.31 160.75L714.19 157.49L718.14 154.23L722.14 150.98L726.19 147.72L730.3 144.46L734.46 141.21L738.68 137.95L742.94 134.69L747.25 131.44L751.61 128.18L756.01 124.92L760.46 121.67L764.95 118.41L769.49 115.15L774.06 111.9L778.68 108.64L783.33 105.38L788.01 102.13L792.74 98.87L797.49 95.61L802.28 92.36L807.1 89.1L811.95 85.84L816.82 82.58L821.72 79.33L826.65 76.07L831.6 72.81L836.57 69.56L841.56 66.3L846.57 63.04L851.59 59.79L856.63 56.53L861.69 53.27L866.76 50.02L871.84 46.76L876.92 43.5L882.02 40.25L887.12 36.99L892.23 33.73L897.34 30.48L902.45 27.22"/><path d="M902.45 613.44L896.49 610.18L890.53 606.93L884.57 603.67L878.62 600.41L872.67 597.16L866.73 593.9L860.81 590.64L854.9 587.39L849 584.13L843.12 580.87L837.25 577.62L831.41 574.36L825.59 571.1L819.79 567.85L814.01 564.59L808.27 561.33L802.55 558.08L796.86 554.82L791.21 551.56L785.59 548.3L780 545.05L774.45 541.79L768.94 538.53L763.47 535.28L758.05 532.02L752.66 528.76L747.33 525.51L742.04 522.25L736.8 518.99L731.61 515.74L726.47 512.48L721.38 509.22L716.35 505.97L711.38 502.71L706.47 499.45L701.61 496.2L696.82 492.94L692.09 489.68L687.42 486.43L682.82 483.17L678.28 479.91L673.82 476.66L669.42 473.4L665.09 470.14L660.84 466.89L656.66 463.63L652.56 460.37L648.53 457.11L644.58 453.86L640.7 450.6L636.91 447.34L633.2 444.09L629.57 440.83L626.02 437.57L622.56 434.32L619.18 431.06L615.89 427.8L612.68 424.55L609.57 421.29L606.54 418.03L603.6 414.78L600.76 411.52L598 408.26L595.34 405.01L592.78 401.75L590.3 398.49L587.93 395.24L585.64 391.98L583.46 388.72L581.37 385.47L579.38 382.21L577.49 378.95L575.69 375.7L574 372.44L572.41 369.18L570.91 365.92L569.52 362.67L568.23 359.41L567.04 356.15L565.95 352.9L564.97 349.64L564.09 346.38L563.31 343.13L562.63 339.87L562.06 336.61L561.59 333.36L561.23 330.1L560.97 326.84L560.81 323.59L560.76 320.33L560.81 317.07L560.97 313.82L561.23 310.56L561.59 307.3L562.06 304.05L562.63 300.79L563.31 297.53L564.09 294.28L564.97 291.02L565.95 287.76L567.04 284.51L568.23 281.25L569.52 277.99L570.91 274.74L572.41 271.48L574 268.22L575.69 264.96L577.49 261.71L579.38 258.45L581.37 255.19L583.46 251.94L585.64 248.68L587.93 245.42L590.3 242.17L592.78 238.91L595.34 235.65L598 232.4L600.76 229.14L603.6 225.88L606.54 222.63L609.57 219.37L612.68 216.11L615.89 212.86L619.18 209.6L622.56 206.34L626.02 203.09L629.57 199.83L633.2 196.57L636.91 193.32L640.7 190.06L644.58 186.8L648.53 183.55L652.56 180.29L656.66 177.03L660.84 173.77L665.09 170.52L669.42 167.26L673.82 164L678.28 160.75L682.82 157.49L687.42 154.23L692.09 150.98L696.82 147.72L701.61 144.46L706.47 141.21L711.38 137.95L716.35 134.69L721.38 131.44L726.47 128.18L731.61 124.92L736.8 121.67L742.04 118.41L747.33 115.15L752.66 111.9L758.05 108.64L763.47 105.38L768.94 102.13L774.45 98.87L780 95.61L785.59 92.36L791.21 89.1L796.86 85.84L802.55 82.58L808.27 79.33L814.01 76.07L819.79 72.81L825.59 69.56L831.41 66.3L837.25 63.04L843.12 59.79L849 56.53L854.9 53.27L860.81 50.02L866.73 46.76L872.67 43.5L878.62 40.25L884.57 36.99L890.53 33.73L896.49 30.48L902.45 27.22"/><path d="M902.45 613.44L895.63 610.18L888.82 606.93L882.01 603.67L875.21 600.41L868.42 597.16L861.63 593.9L854.86 590.64L848.1 587.39L841.36 584.13L834.64 580.87L827.94 577.62L821.26 574.36L814.61 571.1L807.98 567.85L801.38 564.59L794.81 561.33L788.28 558.08L781.78 554.82L775.32 551.56L768.89 548.3L762.51 545.05L756.17 541.79L749.87 538.53L743.62 535.28L737.42 532.02L731.27 528.76L725.17 525.51L719.12 522.25L713.13 518.99L707.2 515.74L701.33 512.48L695.52 509.22L689.77 505.97L684.09 502.71L678.47 499.45L672.92 496.2L667.44 492.94L662.03 489.68L656.7 486.43L651.44 483.17L646.26 479.91L641.15 476.66L636.13 473.4L631.19 470.14L626.32 466.89L621.55 463.63L616.86 460.37L612.25 457.11L607.74 453.86L603.31 450.6L598.97 447.34L594.73 444.09L590.58 440.83L586.53 437.57L582.57 434.32L578.71 431.06L574.95 427.8L571.29 424.55L567.73 421.29L564.27 418.03L560.91 414.78L557.66 411.52L554.51 408.26L551.47 405.01L548.54 401.75L545.71 398.49L542.99 395.24L540.38 391.98L537.89 388.72L535.5 385.47L533.23 382.21L531.06 378.95L529.01 375.7L527.08 372.44L525.26 369.18L523.55 365.92L521.96 362.67L520.48 359.41L519.12 356.15L517.88 352.9L516.76 349.64L515.75 346.38L514.86 343.13L514.09 339.87L513.44 336.61L512.9 333.36L512.49 330.1L512.19 326.84L512.01 323.59L511.95 320.33L512.01 317.07L512.19 313.82L512.49 310.56L512.9 307.3L513.44 304.05L514.09 300.79L514.86 297.53L515.75 294.28L516.76 291.02L517.88 287.76L519.12 284.51L520.48 281.25L521.96 277.99L523.55 274.74L525.26 271.48L527.08 268.22L529.01 264.96L531.06 261.71L533.23 258.45L535.5 255.19L537.89 251.94L540.38 248.68L542.99 245.42L545.71 242.17L548.54 238.91L551.47 235.65L554.51 232.4L557.66 229.14L560.91 225.88L564.27 222.63L567.73 219.37L571.29 216.11L574.95 212.86L578.71 209.6L582.57 206.34L586.53 203.09L590.58 199.83L594.73 196.57L598.97 193.32L603.31 190.06L607.74 186.8L612.25 183.55L616.86 180.29L621.55 177.03L626.32 173.77L631.19 170.52L636.13 167.26L641.15 164L646.26 160.75L651.44 157.49L656.7 154.23L662.03 150.98L667.44 147.72L672.92 144.46L678.47 141.21L684.09 137.95L689.77 134.69L695.52 131.44L701.33 128.18L707.2 124.92L713.13 121.67L719.12 118.41L725.17 115.15L731.27 111.9L737.42 108.64L743.62 105.38L749.87 102.13L756.17 98.87L762.51 95.61L768.89 92.36L775.32 89.1L781.78 85.84L788.28 82.58L794.81 79.33L801.38 76.07L807.98 72.81L814.61 69.56L821.26 66.3L827.94 63.04L834.64 59.79L841.36 56.53L848.1 53.27L854.86 50.02L861.63 46.76L868.42 43.5L875.21 40.25L882.01 36.99L888.82 33.73L895.63 30.48L902.45 27.22"/><path d="M902.45 613.44L894.78 610.18L887.12 606.93L879.46 603.67L871.81 600.41L864.16 597.16L856.53 593.9L848.91 590.64L841.31 587.39L833.73 584.13L826.16 580.87L818.63 577.62L811.11 574.36L803.63 571.1L796.17 567.85L788.75 564.59L781.36 561.33L774.01 558.08L766.69 554.82L759.42 551.56L752.2 548.3L745.01 545.05L737.88 541.79L730.8 538.53L723.77 535.28L716.79 532.02L709.87 528.76L703.01 525.51L696.21 522.25L689.47 518.99L682.79 515.74L676.19 512.48L669.65 509.22L663.18 505.97L656.79 502.71L650.47 499.45L644.23 496.2L638.07 492.94L631.98 489.68L625.98 486.43L620.07 483.17L614.24 479.91L608.49 476.66L602.84 473.4L597.28 470.14L591.81 466.89L586.44 463.63L581.16 460.37L575.98 457.11L570.9 453.86L565.92 450.6L561.04 447.34L556.27 444.09L551.6 440.83L547.04 437.57L542.59 434.32L538.24 431.06L534.01 427.8L529.89 424.55L525.89 421.29L521.99 418.03L518.22 414.78L514.56 411.52L511.02 408.26L507.6 405.01L504.3 401.75L501.12 398.49L498.06 395.24L495.13 391.98L492.32 388.72L489.63 385.47L487.07 382.21L484.64 378.95L482.33 375.7L480.16 372.44L478.11 369.18L476.19 365.92L474.4 362.67L472.74 359.41L471.21 356.15L469.81 352.9L468.55 349.64L467.41 346.38L466.41 343.13L465.54 339.87L464.81 336.61L464.21 333.36L463.74 330.1L463.41 326.84L463.2 323.59L463.14 320.33L463.2 317.07L463.41 313.82L463.74 310.56L464.21 307.3L464.81 304.05L465.54 300.79L466.41 297.53L467.41 294.28L468.55 291.02L469.81 287.76L471.21 284.51L472.74 281.25L474.4 277.99L476.19 274.74L478.11 271.48L480.16 268.22L482.33 264.96L484.64 261.71L487.07 258.45L489.63 255.19L492.32 251.94L495.13 248.68L498.06 245.42L501.12 242.17L504.3 238.91L507.6 235.65L511.02 232.4L514.56 229.14L518.22 225.88L521.99 222.63L525.89 219.37L529.89 216.11L534.01 212.86L538.24 209.6L542.59 206.34L547.04 203.09L551.6 199.83L556.27 196.57L561.04 193.32L565.92 190.06L570.9 186.8L575.98 183.55L581.16 180.29L586.44 177.03L591.81 173.77L597.28 170.52L602.84 167.26L608.49 164L614.24 160.75L620.07 157.49L625.98 154.23L631.98 150.98L638.07 147.72L644.23 144.46L650.47 141.21L656.79 137.95L663.18 134.69L669.65 131.44L676.19 128.18L682.79 124.92L689.47 121.67L696.21 118.41L703.01 115.15L709.87 111.9L716.79 108.64L723.77 105.38L730.8 102.13L737.88 98.87L745.01 95.61L752.2 92.36L759.42 89.1L766.69 85.84L774.01 82.58L781.36 79.33L788.75 76.07L796.17 72.81L803.63 69.56L811.11 66.3L818.63 63.04L826.16 59.79L833.73 56.53L841.31 53.27L848.91 50.02L856.53 46.76L864.16 43.5L871.81 40.25L879.46 36.99L887.12 33.73L894.78 30.48L902.45 27.22"/><path d="M902.45 613.44L893.93 610.18L885.41 606.93L876.9 603.67L868.4 600.41L859.91 597.16L851.43 593.9L842.96 590.64L834.52 587.39L826.09 584.13L817.69 580.87L809.31 577.62L800.96 574.36L792.65 571.1L784.36 567.85L776.11 564.59L767.9 561.33L759.74 558.08L751.61 554.82L743.53 551.56L735.5 548.3L727.52 545.05L719.6 541.79L711.72 538.53L703.91 535.28L696.16 532.02L688.47 528.76L680.85 525.51L673.29 522.25L665.8 518.99L658.39 515.74L651.05 512.48L643.78 509.22L636.6 505.97L629.49 502.71L622.47 499.45L615.54 496.2L608.69 492.94L601.93 489.68L595.26 486.43L588.69 483.17L582.21 479.91L575.83 476.66L569.55 473.4L563.37 470.14L557.29 466.89L551.32 463.63L545.46 460.37L539.7 457.11L534.06 453.86L528.52 450.6L523.11 447.34L517.8 444.09L512.62 440.83L507.55 437.57L502.6 434.32L497.78 431.06L493.07 427.8L488.5 424.55L484.05 421.29L479.72 418.03L475.53 414.78L471.46 411.52L467.53 408.26L463.73 405.01L460.06 401.75L456.53 398.49L453.13 395.24L449.87 391.98L446.75 388.72L443.76 385.47L440.92 382.21L438.22 378.95L435.65 375.7L433.23 372.44L430.96 369.18L428.82 365.92L426.84 362.67L424.99 359.41L423.29 356.15L421.74 352.9L420.33 349.64L419.08 346.38L417.96 343.13L417 339.87L416.18 336.61L415.51 333.36L414.99 330.1L414.62 326.84L414.4 323.59L414.33 320.33L414.4 317.07L414.62 313.82L414.99 310.56L415.51 307.3L416.18 304.05L417 300.79L417.96 297.53L419.08 294.28L420.33 291.02L421.74 287.76L423.29 284.51L424.99 281.25L426.84 277.99L428.82 274.74L430.96 271.48L433.23 268.22L435.65 264.96L438.22 261.71L440.92 258.45L443.76 255.19L446.75 251.94L449.87 248.68L453.13 245.42L456.53 242.17L460.06 238.91L463.73 235.65L467.53 232.4L471.46 229.14L475.53 225.88L479.72 222.63L484.05 219.37L488.5 216.11L493.07 212.86L497.78 209.6L502.6 206.34L507.55 203.09L512.62 199.83L517.8 196.57L523.11 193.32L528.52 190.06L534.06 186.8L539.7 183.55L545.46 180.29L551.32 177.03L557.29 173.77L563.37 170.52L569.55 167.26L575.83 164L582.21 160.75L588.69 157.49L595.26 154.23L601.93 150.98L608.69 147.72L615.54 144.46L622.47 141.21L629.49 137.95L636.6 134.69L643.78 131.44L651.05 128.18L658.39 124.92L665.8 121.67L673.29 118.41L680.85 115.15L688.47 111.9L696.16 108.64L703.91 105.38L711.72 102.13L719.6 98.87L727.52 95.61L735.5 92.36L743.53 89.1L751.61 85.84L759.74 82.58L767.9 79.33L776.11 76.07L784.36 72.81L792.65 69.56L800.96 66.3L809.31 63.04L817.69 59.79L826.09 56.53L834.52 53.27L842.96 50.02L851.43 46.76L859.91 43.5L868.4 40.25L876.9 36.99L885.41 33.73L893.93 30.48L902.45 27.22"/><path d="M902.45 613.44L893.08 610.18L883.71 606.93L874.35 603.67L865 600.41L855.65 597.16L846.32 593.9L837.01 590.64L827.72 587.39L818.45 584.13L809.21 580.87L800 577.62L790.81 574.36L781.67 571.1L772.55 567.85L763.48 564.59L754.45 561.33L745.46 558.08L736.53 554.82L727.64 551.56L718.81 548.3L710.03 545.05L701.31 541.79L692.65 538.53L684.06 535.28L675.53 532.02L667.07 528.76L658.69 525.51L650.37 522.25L642.14 518.99L633.98 515.74L625.91 512.48L617.92 509.22L610.01 505.97L602.2 502.71L594.48 499.45L586.85 496.2L579.31 492.94L571.88 489.68L564.54 486.43L557.31 483.17L550.19 479.91L543.17 476.66L536.26 473.4L529.46 470.14L522.78 466.89L516.21 463.63L509.76 460.37L503.43 457.11L497.22 453.86L491.13 450.6L485.17 447.34L479.34 444.09L473.63 440.83L468.06 437.57L462.62 434.32L457.31 431.06L452.14 427.8L447.1 424.55L442.2 421.29L437.45 418.03L432.83 414.78L428.36 411.52L424.04 408.26L419.85 405.01L415.82 401.75L411.93 398.49L408.2 395.24L404.61 391.98L401.18 388.72L397.89 385.47L394.77 382.21L391.79 378.95L388.97 375.7L386.31 372.44L383.81 369.18L381.46 365.92L379.27 362.67L377.25 359.41L375.38 356.15L373.67 352.9L372.12 349.64L370.74 346.38L369.51 343.13L368.45 339.87L367.56 336.61L366.82 333.36L366.25 330.1L365.84 326.84L365.59 323.59L365.51 320.33L365.59 317.07L365.84 313.82L366.25 310.56L366.82 307.3L367.56 304.05L368.45 300.79L369.51 297.53L370.74 294.28L372.12 291.02L373.67 287.76L375.38 284.51L377.25 281.25L379.27 277.99L381.46 274.74L383.81 271.48L386.31 268.22L388.97 264.96L391.79 261.71L394.77 258.45L397.89 255.19L401.18 251.94L404.61 248.68L408.2 245.42L411.93 242.17L415.82 238.91L419.85 235.65L424.04 232.4L428.36 229.14L432.83 225.88L437.45 222.63L442.2 219.37L447.1 216.11L452.14 212.86L457.31 209.6L462.62 206.34L468.06 203.09L473.63 199.83L479.34 196.57L485.17 193.32L491.13 190.06L497.22 186.8L503.43 183.55L509.76 180.29L516.21 177.03L522.78 173.77L529.46 170.52L536.26 167.26L543.17 164L550.19 160.75L557.31 157.49L564.54 154.23L571.88 150.98L579.31 147.72L586.85 144.46L594.48 141.21L602.2 137.95L610.01 134.69L617.92 131.44L625.91 128.18L633.98 124.92L642.14 121.67L650.37 118.41L658.69 115.15L667.07 111.9L675.53 108.64L684.06 105.38L692.65 102.13L701.31 98.87L710.03 95.61L718.81 92.36L727.64 89.1L736.53 85.84L745.46 82.58L754.45 79.33L763.48 76.07L772.55 72.81L781.67 69.56L790.81 66.3L800 63.04L809.21 59.79L818.45 56.53L827.72 53.27L837.01 50.02L846.32 46.76L855.65 43.5L865 40.25L874.35 36.99L883.71 33.73L893.08 30.48L902.45 27.22"/><path d="M902.45 613.44L892.23 610.18L882.01 606.93L871.79 603.67L861.59 600.41L851.4 597.16L841.22 593.9L831.07 590.64L820.93 587.39L810.82 584.13L800.74 580.87L790.68 577.62L780.67 574.36L770.68 571.1L760.74 567.85L750.85 564.59L741 561.33L731.19 558.08L721.44 554.82L711.75 551.56L702.11 548.3L692.54 545.05L683.02 541.79L673.58 538.53L664.2 535.28L654.9 532.02L645.67 528.76L636.53 525.51L627.46 522.25L618.47 518.99L609.58 515.74L600.77 512.48L592.05 509.22L583.43 505.97L574.9 502.71L566.48 499.45L558.15 496.2L549.94 492.94L541.83 489.68L533.83 486.43L525.94 483.17L518.16 479.91L510.51 476.66L502.97 473.4L495.55 470.14L488.26 466.89L481.1 463.63L474.06 460.37L467.15 457.11L460.38 453.86L453.74 450.6L447.24 447.34L440.87 444.09L434.65 440.83L428.57 437.57L422.63 434.32L416.84 431.06L411.2 427.8L405.71 424.55L400.36 421.29L395.18 418.03L390.14 414.78L385.26 411.52L380.54 408.26L375.98 405.01L371.58 401.75L367.34 398.49L363.26 395.24L359.35 391.98L355.61 388.72L352.03 385.47L348.61 382.21L345.37 378.95L342.29 375.7L339.39 372.44L336.66 369.18L334.1 365.92L331.71 362.67L329.5 359.41L327.46 356.15L325.6 352.9L323.91 349.64L322.4 346.38L321.07 343.13L319.91 339.87L318.93 336.61L318.13 333.36L317.5 330.1L317.06 326.84L316.79 323.59L316.7 320.33L316.79 317.07L317.06 313.82L317.5 310.56L318.13 307.3L318.93 304.05L319.91 300.79L321.07 297.53L322.4 294.28L323.91 291.02L325.6 287.76L327.46 284.51L329.5 281.25L331.71 277.99L334.1 274.74L336.66 271.48L339.39 268.22L342.29 264.96L345.37 261.71L348.61 258.45L352.03 255.19L355.61 251.94L359.35 248.68L363.26 245.42L367.34 242.17L371.58 238.91L375.98 235.65L380.54 232.4L385.26 229.14L390.14 225.88L395.18 222.63L400.36 219.37L405.71 216.11L411.2 212.86L416.84 209.6L422.63 206.34L428.57 203.09L434.65 199.83L440.87 196.57L447.24 193.32L453.74 190.06L460.38 186.8L467.15 183.55L474.06 180.29L481.1 177.03L488.26 173.77L495.55 170.52L502.97 167.26L510.51 164L518.16 160.75L525.94 157.49L533.83 154.23L541.83 150.98L549.94 147.72L558.15 144.46L566.48 141.21L574.9 137.95L583.43 134.69L592.05 131.44L600.77 128.18L609.58 124.92L618.47 121.67L627.46 118.41L636.53 115.15L645.67 111.9L654.9 108.64L664.2 105.38L673.58 102.13L683.02 98.87L692.54 95.61L702.11 92.36L711.75 89.1L721.44 85.84L731.19 82.58L741 79.33L750.85 76.07L760.74 72.81L770.68 69.56L780.67 66.3L790.68 63.04L800.74 59.79L810.82 56.53L820.93 53.27L831.07 50.02L841.22 46.76L851.4 43.5L861.59 40.25L871.79 36.99L882.01 33.73L892.23 30.48L902.45 27.22"/></g>
<g fill="#8a8a8a" font-size="11"><text x="1488.2" y="330.3" text-anchor="middle">+180<tspan font-size="6.5" dy="-4.5" dx="2">&#176;</tspan></text><text x="1390.57" y="330.3" text-anchor="middle">+210<tspan font-size="6.5" dy="-4.5" dx="2">&#176;</tspan></text><text x="1292.95" y="330.3" text-anchor="middle">+240<tspan font-size="6.5" dy="-4.5" dx="2">&#176;</tspan></text><text x="1195.32" y="330.3" text-anchor="middle">+270<tspan font-size="6.5" dy="-4.5" dx="2">&#176;</tspan></text><text x="1097.7" y="330.3" text-anchor="middle">+300<tspan font-size="6.5" dy="-4.5" dx="2">&#176;</tspan></text><text x="1000.07" y="330.3" text-anchor="middle">+330<tspan font-size="6.5" dy="-4.5" dx="2">&#176;</tspan></text><text x="902.45" y="330.3" text-anchor="middle">+0<tspan font-size="6.5" dy="-4.5" dx="2">&#176;</tspan></text><text x="804.83" y="330.3" text-anchor="middle">+30<tspan font-size="6.5" dy="-4.5" dx="2">&#176;</tspan></text><text x="707.2" y="330.3" text-anchor="middle">+60<tspan font-size="6.5" dy="-4.5" dx="2">&#176;</tspan></text><text x="609.58" y="330.3" text-anchor="middle">+90<tspan font-size="6.5" dy="-4.5" dx="2">&#176;</tspan></text><text x="511.95" y="330.3" text-anchor="middle">+120<tspan font-size="6.5" dy="-4.5" dx="2">&#176;</tspan></text><text x="414.33" y="330.3" text-anchor="middle">+150<tspan font-size="6.5" dy="-4.5" dx="2">&#176;</tspan></text><text x="316.7" y="330.3" text-anchor="middle">+180<tspan font-size="6.5" dy="-4.5" dx="2">&#176;</tspan></text><text x="902.45" y="26.02" text-anchor="middle">+90<tspan font-size="6.5" dy="-4.5" dx="2">&#176;</tspan></text><text x="902.45" y="123.72" text-anchor="middle">+60<tspan font-size="6.5" dy="-4.5" dx="2">&#176;</tspan></text><text x="902.45" y="221.43" text-anchor="middle">+30<tspan font-size="6.5" dy="-4.5" dx="2">&#176;</tspan></text><text x="902.45" y="427.83" text-anchor="middle">&#8722;30<tspan font-size="6.5" dy="-4.5" dx="2">&#176;</tspan></text><text x="902.45" y="525.54" text-anchor="middle">&#8722;60<tspan font-size="6.5" dy="-4.5" dx="2">&#176;</tspan></text><text x="902.45" y="623.94" text-anchor="middle">&#8722;90<tspan font-size="6.5" dy="-4.5" dx="2">&#176;</tspan></text></g>
<g fill="none" stroke="#666" stroke-width="1.1" stroke-dasharray="1.1 2.4"><path d="M473.7 298.3L532.5 265.8L567 251L620 231L720 205L770 193"/><path d="M651 219L700 206L761 200.7L820 207L880 227.5L940 258L992.5 295"/><path d="M629 290L684 225.6L720 183"/><path d="M606.7 207.8L652.4 163.6L705.8 106.7L737.8 80"/><path d="M690 215L707.6 195.6L739.6 174.2L766.7 153.3L800 133L833 113.3L866 98L900 88.9L944 100L1000 128.9L1044.4 155.6L1088.9 186.7L1106.7 202.2"/><path d="M1097.8 131L1151 191"/><path d="M925 248L1000 261L1066.7 272L1150 301L1225 330L1300.8 360"/><path d="M1107.5 295L1200 333L1290 367.5"/><path d="M1110 297L1200 336L1285 369"/><path d="M1143 310L1200 350L1248 386.7"/><path d="M880 227.5L940 258L992.5 295"/><path d="M946.7 73L950 140L953.3 216"/></g>
<g fill="none" stroke="#8e8e8e" stroke-width="1.3" stroke-linecap="round"><path d="M906.25 248L925 249L950 252L985 258L1016 265L1040 272L1066.25 279.5"/><path d="M953.75 216.25L953 232"/><path d="M1102.5 292L1107.5 295.5"/><path d="M603 214L606.7 207.8"/><path d="M619.6 308.2L628.9 290.4"/><path d="M473.3 298.4L477.8 296.7"/></g>
<g fill="none" stroke-width="1.5" stroke-dasharray="1.5 2.4"><path d="M576 225L595 197L614 169" stroke="#7ad151"/><path d="M597 236L640 246L675 256" stroke="#7ad151"/><path d="M601.8 271.1L595.6 305.6L598.9 348.9" stroke="#29af7f"/><path d="M606.2 271.8L602.2 305.6L611 352" stroke="#29af7f"/><path d="M605.6 274.4L608.9 305.6L616.7 331.1" stroke="#29af7f"/></g>
<g fill="none" stroke-width="1.5"><path d="M609 176L614 169" stroke="#7ad151"/><path d="M664 253L675 256" stroke="#7ad151"/><path d="M597 340L598.6 348.7" stroke="#29af7f"/><path d="M609 347L612.1 355.8" stroke="#29af7f"/><path d="M614 323L617 330.9" stroke="#29af7f"/></g>
<g fill="#ff6030"><circle cx="614" cy="169" r="1.3"/><circle cx="675" cy="256" r="1.3"/><circle cx="598.6" cy="348.7" r="1.3"/><circle cx="612.1" cy="355.8" r="1.3"/><circle cx="617" cy="330.9" r="1.3"/></g>
<ellipse cx="601.2" cy="229.4" rx="36.4" ry="16.6" transform="rotate(-32 601.2 229.4)" fill="none" stroke="#7ad151" stroke-width="2.2"/>
<ellipse cx="603.7" cy="269.2" rx="30.2" ry="20.8" transform="rotate(-38.5 603.7 269.2)" fill="none" stroke="#29af7f" stroke-width="2.2"/>
<g fill="#fff" font-size="11" text-anchor="middle"><text x="599.8" y="232.2">EGE</text><text x="603.4" y="272.2">ORI</text></g>
<g fill="none"><path d="M569.9 239.4H575.1M572.5 236.8V242" stroke="#ff0000" stroke-width="1.3"/><path d="M592.3 236.4H598.3M595.3 233.4V239.4" stroke="#ff0000" stroke-width="1.3"/><path d="M606.9 268.3H612.9M609.9 265.3V271.3" stroke="#ff0000" stroke-width="1.3"/></g>
<g class="mono" fill="#f2f2f2" font-size="13.9" style="font-family:'Liberation Mono',monospace"><text x="314.8" y="29.8" xml:space="preserve">UK0045</text><text x="314.8" y="42.8" xml:space="preserve">Beg: 20251020 18:29:38 (sol = 207.27&#176;)</text><text x="314.8" y="55.8" xml:space="preserve">End: 20251021 03:24:23 (sol = 207.63&#176;)</text><text x="314.8" y="68.8" xml:space="preserve">--------------------------------------</text><text x="314.8" y="81.8" xml:space="preserve">...: 8</text><text x="314.8" y="94.8" xml:space="preserve">ORI: 3</text><text x="314.8" y="107.8" xml:space="preserve">EGE: 2</text></g>
<g fill="#5a5a5a" stroke="#5a5a5a" stroke-width="0.45" font-size="30"><text transform="translate(149.1 696.62) rotate(-90) scale(0.880 1)">APR</text><text transform="translate(294 702) rotate(-90) scale(0.922 1)">MAY</text><text transform="translate(436.1 692.13) rotate(-90) scale(0.884 1)">JUN</text><text transform="translate(576.4 685.14) rotate(-90) scale(0.898 1)">JUL</text><text transform="translate(722.6 699.81) rotate(-90) scale(0.883 1)">AUG</text><text transform="translate(871.5 693.87) rotate(-90) scale(0.870 1)">SEP</text><text transform="translate(1016.2 700.73) rotate(-90) scale(0.918 1)">OCT</text><text transform="translate(1169.4 705.24) rotate(-90) scale(0.942 1)">NOV</text><text transform="translate(1318.4 701.62) rotate(-90) scale(0.903 1)">DEC</text><text transform="translate(1469.4 686) rotate(-90) scale(0.860 1)">JAN</text><text transform="translate(1629.2 696.28) rotate(-90) scale(0.860 1)">FEB</text><text transform="translate(1766.7 705.85) rotate(-90) scale(0.925 1)">MAR</text></g>
<g fill="none" stroke="#ff0000" stroke-width="1.3" stroke-dasharray="5.14 2.22"><path d="M1036.5 842.5V641.5"/><path d="M1038.5 842.5V641.5"/></g>
<g><rect x="106" y="832.1" width="23.1" height="3.8" fill="#bddf26"/><rect x="165" y="832.1" width="180" height="3.8" fill="#bddf26"/><rect x="366" y="832.1" width="259" height="3.8" fill="#bddf26"/><rect x="635" y="832.1" width="151" height="3.8" fill="#bddf26"/><rect x="806.9" y="832.1" width="91.9" height="3.8" fill="#bddf26"/><rect x="920" y="832.1" width="52.8" height="3.8" fill="#bddf26"/><rect x="984" y="832.1" width="82" height="3.8" fill="#bddf26"/><rect x="1082" y="832.1" width="121" height="3.8" fill="#bddf26"/><rect x="1243.9" y="832.1" width="82.1" height="3.8" fill="#bddf26"/><rect x="1336.9" y="832.1" width="18.1" height="3.8" fill="#bddf26"/><rect x="1381.1" y="832.1" width="62.7" height="3.8" fill="#bddf26"/><rect x="1459" y="832.1" width="52.9" height="3.8" fill="#bddf26"/><rect x="1523" y="832.1" width="24" height="3.8" fill="#bddf26"/><rect x="1724" y="832.1" width="24" height="3.8" fill="#bddf26"/><rect x="1757.9" y="832.1" width="24" height="3.8" fill="#bddf26"/><rect x="165" y="815.75" width="23.1" height="3.8" fill="#80d34d"/><rect x="223" y="815.75" width="62.7" height="3.8" fill="#80d34d"/><rect x="312.1" y="815.75" width="27.8" height="3.8" fill="#80d34d"/><rect x="366" y="815.75" width="125.8" height="3.8" fill="#80d34d"/><rect x="507.9" y="815.75" width="146" height="3.8" fill="#80d34d"/><rect x="703.9" y="815.75" width="33.1" height="3.8" fill="#80d34d"/><rect x="772.9" y="815.75" width="72.1" height="3.8" fill="#80d34d"/><rect x="871.1" y="815.75" width="116.8" height="3.8" fill="#80d34d"/><rect x="1002.9" y="815.75" width="13.9" height="3.8" fill="#80d34d"/><rect x="1061.9" y="815.75" width="150.9" height="3.8" fill="#80d34d"/><rect x="1243.9" y="815.75" width="23" height="3.8" fill="#80d34d"/><rect x="1293" y="815.75" width="22.9" height="3.8" fill="#80d34d"/><rect x="1342" y="815.75" width="22.8" height="3.8" fill="#80d34d"/><rect x="1386" y="815.75" width="42.8" height="3.8" fill="#80d34d"/><rect x="1459" y="815.75" width="23.9" height="3.8" fill="#80d34d"/><rect x="1548" y="815.75" width="22.9" height="3.8" fill="#80d34d"/><rect x="165" y="799.4" width="23.1" height="3.8" fill="#50c46a"/><rect x="258.2" y="799.4" width="228.7" height="3.8" fill="#50c46a"/><rect x="507.9" y="799.4" width="106.9" height="3.8" fill="#50c46a"/><rect x="625.9" y="799.4" width="91.9" height="3.8" fill="#50c46a"/><rect x="728.9" y="799.4" width="97.1" height="3.8" fill="#50c46a"/><rect x="949" y="799.4" width="199.9" height="3.8" fill="#50c46a"/><rect x="1160" y="799.4" width="87.8" height="3.8" fill="#50c46a"/><rect x="1257.9" y="799.4" width="185.9" height="3.8" fill="#50c46a"/><rect x="1459" y="799.4" width="23.9" height="3.8" fill="#50c46a"/><rect x="1552" y="799.4" width="23.8" height="3.8" fill="#50c46a"/><rect x="193.8" y="783.05" width="24.1" height="3.8" fill="#2ab07f"/><rect x="320.9" y="783.05" width="185.9" height="3.8" fill="#2ab07f"/><rect x="517.7" y="783.05" width="23.1" height="3.8" fill="#2ab07f"/><rect x="556.8" y="783.05" width="126.1" height="3.8" fill="#2ab07f"/><rect x="806.9" y="783.05" width="24" height="3.8" fill="#2ab07f"/><rect x="953.9" y="783.05" width="18.9" height="3.8" fill="#2ab07f"/><rect x="987.9" y="783.05" width="136.9" height="3.8" fill="#2ab07f"/><rect x="1154.9" y="783.05" width="63.1" height="3.8" fill="#2ab07f"/><rect x="1243.9" y="783.05" width="23" height="3.8" fill="#2ab07f"/><rect x="1316.9" y="783.05" width="24.1" height="3.8" fill="#2ab07f"/><rect x="1396.1" y="783.05" width="22.8" height="3.8" fill="#2ab07f"/><rect x="1463.9" y="783.05" width="186" height="3.8" fill="#2ab07f"/><rect x="340.7" y="766.7" width="29" height="3.8" fill="#1f9b8a"/><rect x="409.8" y="766.7" width="38" height="3.8" fill="#1f9b8a"/><rect x="468.8" y="766.7" width="23" height="3.8" fill="#1f9b8a"/><rect x="527" y="766.7" width="18.9" height="3.8" fill="#1f9b8a"/><rect x="561.9" y="766.7" width="27.9" height="3.8" fill="#1f9b8a"/><rect x="615.8" y="766.7" width="33.2" height="3.8" fill="#1f9b8a"/><rect x="958.9" y="766.7" width="29" height="3.8" fill="#1f9b8a"/><rect x="1061.9" y="766.7" width="24.1" height="3.8" fill="#1f9b8a"/><rect x="1100.9" y="766.7" width="23.9" height="3.8" fill="#1f9b8a"/><rect x="1160" y="766.7" width="33.9" height="3.8" fill="#1f9b8a"/><rect x="1247.8" y="766.7" width="24.1" height="3.8" fill="#1f9b8a"/><rect x="1424.9" y="766.7" width="87" height="3.8" fill="#1f9b8a"/><rect x="419.9" y="750.35" width="23" height="3.8" fill="#24868e"/><rect x="531.9" y="750.35" width="24.1" height="3.8" fill="#24868e"/><rect x="566.9" y="750.35" width="22.9" height="3.8" fill="#24868e"/><rect x="620.9" y="750.35" width="121" height="3.8" fill="#24868e"/><rect x="968.9" y="750.35" width="166" height="3.8" fill="#24868e"/><rect x="1184.9" y="750.35" width="161.1" height="3.8" fill="#24868e"/><rect x="1468.9" y="750.35" width="24.1" height="3.8" fill="#24868e"/><rect x="428.9" y="734" width="24.1" height="3.8" fill="#2e6d8e"/><rect x="576" y="734" width="157.1" height="3.8" fill="#2e6d8e"/><rect x="992.8" y="734" width="112.2" height="3.8" fill="#2e6d8e"/><rect x="1115.8" y="734" width="107.1" height="3.8" fill="#2e6d8e"/><rect x="1263" y="734" width="28.8" height="3.8" fill="#2e6d8e"/><rect x="1488.8" y="734" width="23.1" height="3.8" fill="#2e6d8e"/><rect x="590.9" y="717.65" width="23.9" height="3.8" fill="#38588c"/><rect x="654.9" y="717.65" width="117" height="3.8" fill="#38588c"/><rect x="1072" y="717.65" width="170.9" height="3.8" fill="#38588c"/><rect x="1263" y="717.65" width="23.9" height="3.8" fill="#38588c"/><rect x="595.9" y="701.3" width="137.2" height="3.8" fill="#424086"/><rect x="1090.9" y="701.3" width="29" height="3.8" fill="#424086"/><rect x="1198.9" y="701.3" width="24" height="3.8" fill="#424086"/><rect x="1272.9" y="701.3" width="53" height="3.8" fill="#424086"/><rect x="1111.1" y="684.95" width="23.8" height="3.8" fill="#482475"/></g>
<g fill="none" stroke="#fff" stroke-opacity="0.353" stroke-width="2" stroke-dasharray="2.08 3.44"><path d="M74 842.5V641.5"/><path d="M218 842.5V641.5"/><path d="M365 842.5V641.5"/><path d="M505 842.5V641.5"/><path d="M650 842.5V641.5"/><path d="M797 842.5V641.5"/><path d="M940 842.5V641.5"/><path d="M1091 842.5V641.5"/><path d="M1239 842.5V641.5"/><path d="M1394 842.5V641.5"/><path d="M1548 842.5V641.5"/><path d="M1687 842.5V641.5"/></g>
<g fill="#fff" font-size="11" text-anchor="middle"><text x="117.55" y="832">KSE</text><text x="255" y="832">ETA</text><text x="494.5" y="832">NZC</text><text x="710.5" y="832">NDA</text><text x="852.85" y="832">SPE</text><text x="945.1" y="832">ARD</text><text x="1025" y="832">EGE</text><text x="1142.5" y="832">NTA</text><text x="1284" y="832">MON</text><text x="1343.7" y="832">URS</text><text x="1412.45" y="832">AHY</text><text x="1485.45" y="832">GUM</text><text x="1535" y="832">OHY</text><text x="1736" y="832">XHE</text><text x="1769.9" y="832">EVI</text><text x="175.5" y="815">AVB</text><text x="254.35" y="815">ELY</text><text x="324" y="815">CAM</text><text x="431.7" y="815">SSG</text><text x="578.9" y="815">PCA</text><text x="720.45" y="815">AUD</text><text x="808.95" y="815">AUR</text><text x="931" y="815">DSX</text><text x="1009.85" y="815">OCU</text><text x="1137.35" y="815">OER</text><text x="1255.4" y="815">DKD</text><text x="1304.45" y="815">DSV</text><text x="1353.4" y="815">ALY</text><text x="1407.4" y="815">ILE</text><text x="1471.9" y="815">SCC</text><text x="1559.45" y="815">FEV</text><text x="176.55" y="799">LYR</text><text x="372.55" y="799">JMC</text><text x="559" y="799">JPE</text><text x="671.85" y="799">PAU</text><text x="774.3" y="799">NIA</text><text x="1050" y="799">STA</text><text x="1205.6" y="799">NOO</text><text x="1353.3" y="799">COM</text><text x="1470.95" y="799">NCC</text><text x="1563.9" y="799">FED</text><text x="205.85" y="782">HVI</text><text x="411.9" y="782">ARI</text><text x="529.25" y="782">SZC</text><text x="617.9" y="782">CAP</text><text x="818.9" y="782">NUE</text><text x="961.2" y="782">OCT</text><text x="1059.4" y="782">ORI</text><text x="1186.45" y="782">AMO</text><text x="1255.4" y="782">DPC</text><text x="1328.95" y="782">XVI</text><text x="1407.5" y="782">QUA</text><text x="1559.5" y="782">AAN</text><text x="353.1" y="766">TAH</text><text x="431.3" y="766">JEA</text><text x="480.3" y="766">JIP</text><text x="538.9" y="766">PPS</text><text x="578.8" y="766">ZCS</text><text x="632.4" y="766">GDR</text><text x="970.3" y="766">DRA</text><text x="1073.2" y="766">LUM</text><text x="1112.85" y="766">RPU</text><text x="1176.95" y="766">THA</text><text x="1259.85" y="766">PSU</text><text x="1470.7" y="766">XCB</text><text x="431.4" y="750">JRC</text><text x="543.95" y="750">CAN</text><text x="578.35" y="750">FAN</text><text x="681.4" y="750">PER</text><text x="1049.2" y="750">CTA</text><text x="1264.6" y="750">HYD</text><text x="1480.95" y="750">XUM</text><text x="440.95" y="733">COR</text><text x="657.1" y="733">SDA</text><text x="1048.9" y="733">LMI</text><text x="1166.4" y="733">LEO</text><text x="1274.8" y="733">EHY</text><text x="1500.35" y="733">ECV</text><text x="602.85" y="717">JXA</text><text x="715" y="717">KCG</text><text x="1157.45" y="717">AND</text><text x="1274.95" y="717">DAD</text><text x="666.5" y="701">ERI</text><text x="1108.5" y="701">SLD</text><text x="1210.9" y="701">ORS</text><text x="1299.4" y="701">GEM</text><text x="1123" y="684">KUM</text></g>
<g fill="none" stroke="#fff" stroke-width="2"><path d="M112.7 834H120.7M116.7 830.2V837.8"/><path d="M240.6 834H248.6M244.6 830.2V837.8"/><path d="M510.6 834H518.6M514.6 830.2V837.8"/><path d="M706.8 834H714.8M710.8 830.2V837.8"/><path d="M832.7 834H840.7M836.7 830.2V837.8"/><path d="M961.9 834H969.9M965.9 830.2V837.8"/><path d="M985.7 834H993.7M989.7 830.2V837.8"/><path d="M1115.9 834H1123.9M1119.9 830.2V837.8"/><path d="M1294.7 834H1302.7M1298.7 830.2V837.8"/><path d="M1341.5 834H1349.5M1345.5 830.2V837.8"/><path d="M1412.9 834H1420.9M1416.9 830.2V837.8"/><path d="M1481.7 834H1489.7M1485.7 830.2V837.8"/><path d="M1530.5 834H1538.5M1534.5 830.2V837.8"/><path d="M1732 834H1740M1736 830.2V837.8"/><path d="M1765.9 834H1773.9M1769.9 830.2V837.8"/><path d="M171.9 817.65H179.9M175.9 813.85V821.45"/><path d="M255.8 817.65H263.8M259.8 813.85V821.45"/><path d="M322.9 817.65H330.9M326.9 813.85V821.45"/><path d="M436.6 817.65H444.6M440.6 813.85V821.45"/><path d="M598.6 817.65H606.6M602.6 813.85V821.45"/><path d="M716.7 817.65H724.7M720.7 813.85V821.45"/><path d="M792.8 817.65H800.8M796.8 813.85V821.45"/><path d="M938.8 817.65H946.8M942.8 813.85V821.45"/><path d="M1005.4 817.65H1013.4M1009.4 813.85V821.45"/><path d="M1152.7 817.65H1160.7M1156.7 813.85V821.45"/><path d="M1250.6 817.65H1258.6M1254.6 813.85V821.45"/><path d="M1300 817.65H1308M1304 813.85V821.45"/><path d="M1348.9 817.65H1356.9M1352.9 813.85V821.45"/><path d="M1402.6 817.65H1410.6M1406.6 813.85V821.45"/><path d="M1466.7 817.65H1474.7M1470.7 813.85V821.45"/><path d="M1554.5 817.65H1562.5M1558.5 813.85V821.45"/><path d="M173.8 801.3H181.8M177.8 797.5V805.1"/><path d="M377.7 801.3H385.7M381.7 797.5V805.1"/><path d="M544.6 801.3H552.6M548.6 797.5V805.1"/><path d="M681.8 801.3H689.8M685.8 797.5V805.1"/><path d="M740.6 801.3H748.6M744.6 797.5V805.1"/><path d="M1074.6 801.3H1082.6M1078.6 797.5V805.1"/><path d="M1216.7 801.3H1224.7M1220.7 797.5V805.1"/><path d="M1304.6 801.3H1312.6M1308.6 797.5V805.1"/><path d="M1466.7 801.3H1474.7M1470.7 797.5V805.1"/><path d="M1559.9 801.3H1567.9M1563.9 797.5V805.1"/><path d="M201.8 784.95H209.8M205.8 781.15V788.75"/><path d="M399.6 784.95H407.6M403.6 781.15V788.75"/><path d="M524.4 784.95H532.4M528.4 781.15V788.75"/><path d="M638.6 784.95H646.6M642.6 781.15V788.75"/><path d="M814.7 784.95H822.7M818.7 781.15V788.75"/><path d="M958.6 784.95H966.6M962.6 781.15V788.75"/><path d="M1039.8 784.95H1047.8M1043.8 781.15V788.75"/><path d="M1187.7 784.95H1195.7M1191.7 781.15V788.75"/><path d="M1250.6 784.95H1258.6M1254.6 781.15V788.75"/><path d="M1324.8 784.95H1332.8M1328.8 781.15V788.75"/><path d="M1402.8 784.95H1410.8M1406.8 781.15V788.75"/><path d="M1545.7 784.95H1553.7M1549.7 781.15V788.75"/><path d="M355.7 768.6H363.7M359.7 764.8V772.4"/><path d="M425.7 768.6H433.7M429.7 764.8V772.4"/><path d="M475.7 768.6H483.7M479.7 764.8V772.4"/><path d="M534.7 768.6H542.7M538.7 764.8V772.4"/><path d="M570.7 768.6H578.7M574.7 764.8V772.4"/><path d="M630.8 768.6H638.8M634.8 764.8V772.4"/><path d="M973.8 768.6H981.8M977.8 764.8V772.4"/><path d="M1069.7 768.6H1077.7M1073.7 764.8V772.4"/><path d="M1108.9 768.6H1116.9M1112.9 764.8V772.4"/><path d="M1177.8 768.6H1185.8M1181.8 764.8V772.4"/><path d="M1255.7 768.6H1263.7M1259.7 764.8V772.4"/><path d="M1466.7 768.6H1474.7M1470.7 764.8V772.4"/><path d="M426.7 752.25H434.7M430.7 748.45V756.05"/><path d="M539.8 752.25H547.8M543.8 748.45V756.05"/><path d="M573.8 752.25H581.8M577.8 748.45V756.05"/><path d="M703.8 752.25H711.8M707.8 748.45V756.05"/><path d="M1093.7 752.25H1101.7M1097.7 748.45V756.05"/><path d="M1270.9 752.25H1278.9M1274.9 748.45V756.05"/><path d="M1476.8 752.25H1484.8M1480.8 748.45V756.05"/><path d="M437 735.9H445M441 732.1V739.7"/><path d="M630.8 735.9H638.8M634.8 732.1V739.7"/><path d="M1038.3 735.9H1046.3M1042.3 732.1V739.7"/><path d="M1167.9 735.9H1175.9M1171.9 732.1V739.7"/><path d="M1274.6 735.9H1282.6M1278.6 732.1V739.7"/><path d="M1496.8 735.9H1504.8M1500.8 732.1V739.7"/><path d="M598.8 719.55H606.8M602.8 715.75V723.35"/><path d="M726.8 719.55H734.8M730.8 715.75V723.35"/><path d="M1187.9 719.55H1195.9M1191.9 715.75V723.35"/><path d="M1270.9 719.55H1278.9M1274.9 715.75V723.35"/><path d="M686.9 703.2H694.9M690.9 699.4V707"/><path d="M1101.5 703.2H1109.5M1105.5 699.4V707"/><path d="M1206.8 703.2H1214.8M1210.8 699.4V707"/><path d="M1299.9 703.2H1307.9M1303.9 699.4V707"/><path d="M1118.4 686.85H1126.4M1122.4 683.05V690.65"/></g>
<rect x="19.5" y="641.5" width="1766" height="201" fill="none" stroke="#fff" stroke-width="1.11"/>
<g stroke="#fff" stroke-width="1.1"><path d="M19.5 842.5V847.4"/><path d="M265.5 842.5V847.4"/><path d="M510.5 842.5V847.4"/><path d="M755.5 842.5V847.4"/><path d="M1000.5 842.5V847.4"/><path d="M1246.5 842.5V847.4"/><path d="M1491.5 842.5V847.4"/><path d="M1736.5 842.5V847.4"/></g>
<g fill="#fff" font-size="13.9" text-anchor="middle"><text transform="translate(19.9 862.2) scale(1.1 1)">0</text><text transform="translate(265.15 862.2) scale(1.1 1)">50</text><text transform="translate(510.4 862.2) scale(1.1 1)">100</text><text transform="translate(755.65 862.2) scale(1.1 1)">150</text><text transform="translate(1000.9 862.2) scale(1.1 1)">200</text><text transform="translate(1246.15 862.2) scale(1.1 1)">250</text><text transform="translate(1491.4 862.2) scale(1.1 1)">300</text><text transform="translate(1736.65 862.2) scale(1.1 1)">350</text></g>
<text transform="translate(902.4 882.2) scale(1.144 1)" fill="#fff" font-size="13.9" text-anchor="middle">Solar longitude (deg)</text>
</svg></body></html>
